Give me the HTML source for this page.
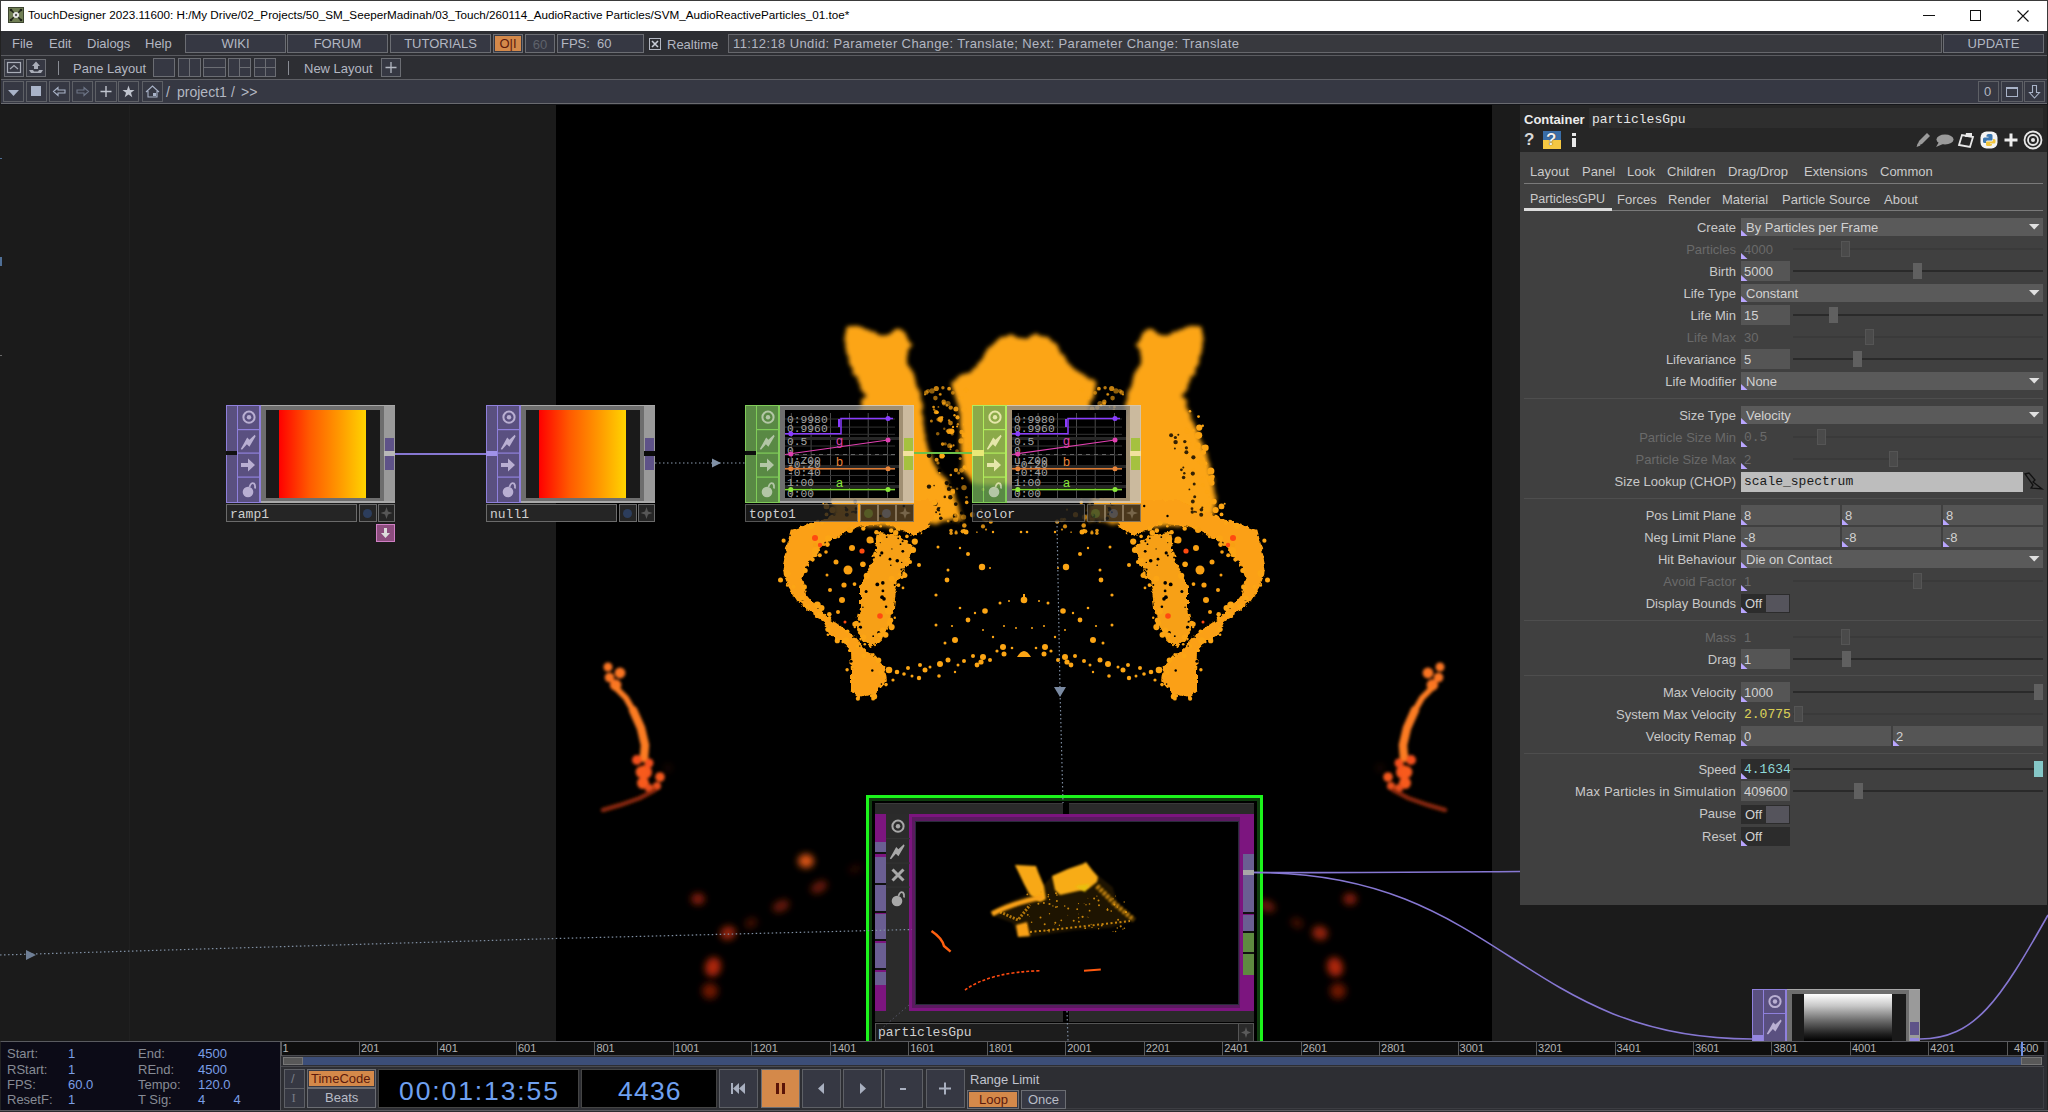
<!DOCTYPE html>
<html><head><meta charset="utf-8">
<style>
*{margin:0;padding:0;box-sizing:border-box}
html,body{width:2048px;height:1112px;overflow:hidden;background:#1b1b1b;font-family:"Liberation Sans",sans-serif;position:relative}
.a{position:absolute}
.t{position:absolute;white-space:nowrap;line-height:1}
.mono{font-family:"Liberation Mono",monospace}
.btn{position:absolute;background:#363843;border:1px solid #6b6d73}
.mt{color:#b3b7c2;font-size:13px}
.c{text-align:center}
svg{position:absolute;overflow:visible}

</style></head><body>
<!-- TITLE BAR -->
<div class="a" style="left:0;top:0;width:2048px;height:31px;background:#fff;border-top:1px solid #3a3a3a;border-left:1px solid #3a3a3a;border-right:1px solid #3a3a3a"></div>
<div class="a" style="left:8px;top:7px;width:16px;height:16px;background:#717f55;border:1px solid #3d4530"></div>
<svg style="left:8px;top:7px" width="16" height="16"><path d="M3 3L6 6M13 3L10 6M3 13L6 10M13 13L10 10" stroke="#1e2218" stroke-width="1.5"/><circle cx="3" cy="3" r="1.3" fill="#1e2218"/><circle cx="13" cy="3" r="1.3" fill="#1e2218"/><circle cx="3" cy="13" r="1.3" fill="#1e2218"/><circle cx="13" cy="13" r="1.3" fill="#1e2218"/><circle cx="8" cy="8" r="3" fill="#e8e8e8"/><circle cx="8" cy="8" r="1.2" fill="#555"/></svg>
<div class="t" style="left:28px;top:9px;font-size:11.7px;color:#000">TouchDesigner 2023.11600: H:/My Drive/02_Projects/50_SM_SeeperMadinah/03_Touch/260114_AudioRactive Particles/SVM_AudioReactiveParticles_01.toe*</div>
<div class="a" style="left:1923px;top:15px;width:12px;height:1px;background:#111"></div>
<div class="a" style="left:1970px;top:10px;width:11px;height:11px;border:1px solid #111"></div>
<svg style="left:2017px;top:10px" width="12" height="12"><path d="M0.5 0.5L11.5 11.5M11.5 0.5L0.5 11.5" stroke="#111" stroke-width="1.1"/></svg>

<!-- BARS -->
<div class="a" style="left:0;top:31px;width:2048px;height:49px;background:#2d2e33;border-left:1px solid #222;border-right:1px solid #222"></div>
<div class="a" style="left:1px;top:55px;width:2046px;height:1px;background:#5a5b60"></div>
<div class="a" style="left:1px;top:79px;width:2046px;height:1px;background:#5f6066"></div>
<div class="a" style="left:0;top:80px;width:2048px;height:23px;background:#363843;border-left:1px solid #222;border-right:1px solid #222"></div>
<div class="a" style="left:1px;top:103px;width:2046px;height:1px;background:#6a6b70"></div>
<div class="a" style="left:0;top:104px;width:2048px;height:1px;background:#15161a"></div>

<!-- MENU -->
<div class="t mt" style="left:12px;top:37px">File</div>
<div class="t mt" style="left:49px;top:37px">Edit</div>
<div class="t mt" style="left:87px;top:37px">Dialogs</div>
<div class="t mt" style="left:145px;top:37px">Help</div>
<div class="btn t mt c" style="left:185px;top:34px;width:101px;height:19px;padding-top:2px">WIKI</div>
<div class="btn t mt c" style="left:287px;top:34px;width:101px;height:19px;padding-top:2px">FORUM</div>
<div class="btn t mt c" style="left:390px;top:34px;width:101px;height:19px;padding-top:2px">TUTORIALS</div>
<div class="btn" style="left:493px;top:34px;width:30px;height:19px"></div>
<div class="t c" style="left:495px;top:36px;width:26px;height:15px;background:#d4894a;color:#5c1a0c;font-size:13px;padding-top:1px">O|I</div>
<div class="btn t c" style="left:525px;top:34px;width:30px;height:19px;padding-top:3px;color:#5f626b;font-size:13px">60</div>
<div class="btn" style="left:557px;top:34px;width:87px;height:19px"></div>
<div class="t mt" style="left:561px;top:37px">FPS:</div>
<div class="t mt" style="left:597px;top:37px">60</div>
<div class="a" style="left:649px;top:38px;width:12px;height:12px;border:1px solid #b3b7c2"></div>
<svg style="left:649px;top:38px" width="12" height="12"><path d="M3 3L9 9M9 3L3 9" stroke="#c8ccd6" stroke-width="1.6"/></svg>
<div class="t mt" style="left:667px;top:38px">Realtime</div>
<div class="a" style="left:728px;top:34px;width:1214px;height:19px;background:#38393e;border:1px solid #66676c"></div>
<div class="t mt" style="left:733px;top:37px;letter-spacing:0.38px">11:12:18 Undid: Parameter Change: Translate; Next: Parameter Change: Translate</div>
<div class="btn t mt c" style="left:1943px;top:34px;width:101px;height:19px;padding-top:2px">UPDATE</div>

<!-- PANE LAYOUT BAR -->
<div class="btn" style="left:4px;top:59px;width:20px;height:18px"></div>
<svg style="left:4px;top:59px" width="20" height="18"><rect x="3.5" y="3.5" width="13" height="10" fill="none" stroke="#a9adb8" stroke-width="1.2"/><path d="M6 10L10 6.5L14 10" fill="none" stroke="#a9adb8" stroke-width="1.2"/></svg>
<div class="btn" style="left:26px;top:59px;width:20px;height:18px"></div>
<svg style="left:26px;top:59px" width="20" height="18"><path d="M3 11 L5 14 L15 14 L17 11 L13 11 L12 12.5 L8 12.5 L7 11Z" fill="#a9adb8"/><path d="M8 10 L8 7 L6 7 L10 2.5 L14 7 L12 7 L12 10Z" fill="#a9adb8"/></svg>
<div class="a" style="left:58px;top:61px;width:1px;height:14px;background:#8a8d95"></div>
<div class="t mt" style="left:73px;top:62px">Pane Layout</div>
<div class="btn" style="left:153px;top:58px;width:22px;height:19px"></div>
<div class="btn" style="left:178px;top:58px;width:23px;height:19px"></div>
<div class="a" style="left:189px;top:58px;width:1px;height:19px;background:#6b6d73"></div>
<div class="btn" style="left:203px;top:58px;width:23px;height:19px"></div>
<div class="a" style="left:203px;top:67px;width:23px;height:1px;background:#6b6d73"></div>
<div class="btn" style="left:228px;top:58px;width:23px;height:19px"></div>
<div class="a" style="left:239px;top:58px;width:1px;height:19px;background:#6b6d73"></div>
<div class="a" style="left:239px;top:67px;width:12px;height:1px;background:#6b6d73"></div>
<div class="btn" style="left:254px;top:58px;width:22px;height:19px"></div>
<div class="a" style="left:265px;top:58px;width:1px;height:19px;background:#6b6d73"></div>
<div class="a" style="left:254px;top:67px;width:22px;height:1px;background:#6b6d73"></div>
<div class="a" style="left:288px;top:61px;width:1px;height:14px;background:#8a8d95"></div>
<div class="t mt" style="left:304px;top:62px">New Layout</div>
<div class="btn" style="left:381px;top:58px;width:20px;height:19px"></div>
<svg style="left:381px;top:58px" width="20" height="19"><path d="M10 4V15M4.5 9.5H15.5" stroke="#b3b7c2" stroke-width="1.3"/></svg>

<!-- PATH BAR -->
<div class="btn" style="left:3px;top:81px;width:21px;height:21px;border-color:#5e6066"></div>
<svg style="left:3px;top:81px" width="21" height="21"><path d="M5 9H16L10.5 15Z" fill="#a9b3c8"/></svg>
<div class="btn" style="left:26px;top:81px;width:21px;height:21px;border-color:#5e6066"></div>
<div class="a" style="left:31px;top:86px;width:10px;height:10px;background:#a9b3c8"></div>
<div class="btn" style="left:49px;top:81px;width:21px;height:21px;border-color:#5e6066"></div>
<svg style="left:49px;top:81px" width="21" height="21"><path d="M4.5 10.5L9 6.5V9H16V12H9V14.5Z" fill="none" stroke="#a9b3c8" stroke-width="1.1"/></svg>
<div class="btn" style="left:72px;top:81px;width:21px;height:21px;border-color:#5e6066"></div>
<svg style="left:72px;top:81px" width="21" height="21"><path d="M16.5 10.5L12 6.5V9H5V12H12V14.5Z" fill="none" stroke="#6e7688" stroke-width="1.1"/></svg>
<div class="btn" style="left:95px;top:81px;width:22px;height:21px;border-color:#5e6066"></div>
<svg style="left:95px;top:81px" width="22" height="21"><path d="M11 5V16M5.5 10.5H16.5" stroke="#c0c4ce" stroke-width="1.4"/></svg>
<div class="btn" style="left:118px;top:81px;width:21px;height:21px;border-color:#5e6066"></div>
<svg style="left:118px;top:81px" width="21" height="21"><path d="M10.5 4.5L12 9H16.5L13 11.8L14.3 16.3L10.5 13.5L6.7 16.3L8 11.8L4.5 9H9Z" fill="#c0c4ce"/></svg>
<div class="btn" style="left:142px;top:81px;width:21px;height:21px;border-color:#5e6066"></div>
<svg style="left:142px;top:81px" width="21" height="21"><path d="M4 11L10.5 5L17 11M6 10V16H15V10" fill="none" stroke="#a9b3c8" stroke-width="1.1"/><rect x="11" y="12" width="3" height="3" fill="#a9b3c8"/></svg>
<div class="t" style="left:166px;top:85px;font-size:14px;color:#b3b7c2">/</div><div class="t" style="left:177px;top:85px;font-size:14px;color:#b3b7c2">project1</div><div class="t" style="left:231px;top:85px;font-size:14px;color:#b3b7c2">/</div><div class="t" style="left:241px;top:85px;font-size:14px;color:#b3b7c2">&gt;&gt;</div>
<div class="a" style="left:1975px;top:80px;width:72px;height:23px;background:#363843"></div>
<div class="btn" style="left:1978px;top:81px;width:21px;height:21px;border-color:#5e6066"></div>
<div class="t" style="left:1984px;top:85px;font-size:13px;color:#b3b7c2">0</div>
<div class="btn" style="left:2001px;top:81px;width:22px;height:21px;border-color:#5e6066"></div>
<div class="a" style="left:2006px;top:87px;width:12px;height:10px;border:1.2px solid #a9b3c8;border-top:2px solid #a9b3c8"></div>
<div class="btn" style="left:2024px;top:81px;width:21px;height:21px;border-color:#5e6066"></div>
<svg style="left:2024px;top:81px" width="21" height="21"><path d="M8.5 4.5H12.5V11.5H15.5L10.5 17L5.5 11.5H8.5Z" fill="none" stroke="#a9b3c8" stroke-width="1.1"/></svg>

<div class="a" style="left:129px;top:105px;width:1px;height:936px;background:#202020"></div>
<div class="a" style="left:0;top:257px;width:2px;height:9px;background:#4f6f96"></div>
<div class="a" style="left:0;top:158px;width:2px;height:1px;background:#4f6f96"></div>
<div class="a" style="left:0;top:355px;width:2px;height:1px;background:#6a6a6a"></div>

<div class="a" style="left:556px;top:105px;width:936px;height:936px;background:#000"></div>

<div class="a" style="left:556px;top:105px;width:936px;height:936px;overflow:hidden">
<svg style="left:-556px;top:-105px" width="2048" height="1112" viewBox="0 0 2048 1112">
<defs>
<filter id="b1" x="-20%" y="-20%" width="140%" height="140%"><feTurbulence type="fractalNoise" baseFrequency="0.2" numOctaves="2" seed="9" result="n"/><feDisplacementMap in="SourceGraphic" in2="n" scale="6" xChannelSelector="R" yChannelSelector="G" result="d"/><feGaussianBlur in="d" stdDeviation="0.7"/></filter>
<filter id="b2" x="-20%" y="-20%" width="140%" height="140%"><feTurbulence type="fractalNoise" baseFrequency="0.12" numOctaves="2" seed="4" result="n"/><feDisplacementMap in="SourceGraphic" in2="n" scale="6" xChannelSelector="R" yChannelSelector="G" result="d"/><feGaussianBlur in="d" stdDeviation="2.3"/></filter>
<filter id="b15" x="-30%" y="-30%" width="160%" height="160%"><feGaussianBlur stdDeviation="1.5"/></filter>
<filter id="b5" x="-100%" y="-100%" width="300%" height="300%"><feGaussianBlur stdDeviation="3.5"/></filter>
</defs>
<path d="M1000.0,337.0 L1015.5,335.0 L1024.0,339.0 L1032.5,335.0 L1048.0,337.0 L1060.0,350.0 L1068.0,362.0 L1076.0,371.0 L1088.0,376.0 L1096.0,383.4 L1094.0,391.2 L1091.0,403.0 L1088.0,415.0 L1088.0,450.0 L1085.0,470.0 L1073.0,485.0 L975.0,485.0 L963.0,470.0 L960.0,450.0 L960.0,415.0 L957.0,403.0 L954.0,391.2 L952.0,383.4 L960.0,376.0 L972.0,371.0 L980.0,362.0 L988.0,350.0 Z" fill="#fca514" filter="url(#b2)"/><circle cx="1024" cy="600" r="3.3" fill="#fca514"/><rect x="1023" y="594" width="2" height="5" fill="#fca514"/><path d="M1017,657 Q1024,645 1031,657Z" fill="#fca514"/>
<g><path d="M846.6,329.6 L851.5,325.7 L869.0,329.6 L884.7,335.5 L898.4,330.6 L904.2,329.6 L908.0,340.4 L913.0,343.3 L907.0,352.0 L907.0,363.8 L914.0,373.6 L916.0,383.4 L920.0,395.0 L923.0,415.0 L925.0,440.0 L933.0,462.0 L952.0,490.0 L963.0,520.0 L900.0,527.0 L836.0,524.0 L832.0,500.0 L838.0,465.0 L850.0,432.0 L862.0,404.8 L859.3,401.0 L867.0,396.0 L861.3,391.2 L857.3,378.5 L849.5,363.8 L844.6,344.3 Z" fill="#fca514" filter="url(#b2)"/>
<path d="M790.7,529.7 L786.2,546.8 L782.6,568.4 L787.1,584.6 L797.0,600.8 L809.6,611.5 L824.0,622.3 L829.4,635.0 L845.6,644.0 L850.0,653.0 L851.0,671.0 L851.0,690.7 L860.0,698.0 L874.4,694.3 L887.0,680.0 L885.0,667.3 L874.4,656.5 L863.6,647.5 L854.6,636.7 L845.6,629.5 L827.6,617.0 L815.0,604.4 L806.0,593.6 L802.4,579.0 L806.0,568.4 L813.2,557.6 L822.2,546.8 L833.0,539.6 L845.6,532.4 L860.0,527.0 L870.8,525.2 L885.0,523.4 L914.0,536.0 L924.7,530.6 L939.0,510.8 L941.0,500.0 L870.8,500.0 L833.0,516.0 L806.0,525.0 Z" fill="#fba012" filter="url(#b1)"/>
<path d="M878.0,532.4 L899.5,536.0 L914.0,546.8 L908.5,564.8 L899.5,575.6 L896.0,590.0 L894.0,608.0 L887.0,626.0 L881.5,640.3 L870.8,647.5 L860.0,636.7 L856.4,626.0 L860.0,608.0 L860.0,586.4 L867.0,572.0 L874.4,554.0 L876.2,541.4 Z" fill="#f7a012" filter="url(#b1)"/>
<circle cx="882.1" cy="597.2" r="1.9" fill="#000"/>
<circle cx="882.9" cy="590.9" r="1.4" fill="#000"/>
<circle cx="866.1" cy="591.4" r="1.5" fill="#000"/>
<circle cx="902.6" cy="541.3" r="1.0" fill="#000"/>
<circle cx="860.4" cy="627.2" r="1.6" fill="#000"/>
<circle cx="891.9" cy="548.9" r="0.6" fill="#000"/>
<circle cx="886.7" cy="537.1" r="0.9" fill="#000"/>
<circle cx="882.8" cy="582.9" r="1.8" fill="#000"/>
<circle cx="886.1" cy="606.8" r="1.3" fill="#000"/>
<circle cx="894.7" cy="584.9" r="1.0" fill="#000"/>
<circle cx="873.9" cy="557.6" r="1.0" fill="#000"/>
<circle cx="859.2" cy="622.0" r="1.2" fill="#000"/>
<circle cx="901.7" cy="562.4" r="0.7" fill="#000"/>
<circle cx="900.5" cy="544.2" r="0.9" fill="#000"/>
<circle cx="902.8" cy="551.3" r="1.4" fill="#000"/>
<circle cx="881.8" cy="552.9" r="1.6" fill="#000"/>
<circle cx="862.9" cy="607.2" r="0.8" fill="#000"/>
<circle cx="880.2" cy="555.5" r="1.0" fill="#000"/>
<circle cx="873.2" cy="636.2" r="0.9" fill="#000"/>
<circle cx="878.7" cy="632.5" r="1.5" fill="#000"/>
<circle cx="901.4" cy="569.5" r="1.0" fill="#000"/>
<circle cx="890.0" cy="559.2" r="1.4" fill="#000"/>
<circle cx="877.3" cy="584.4" r="1.9" fill="#000"/>
<circle cx="884.0" cy="598.9" r="1.8" fill="#000"/>
<circle cx="880.3" cy="542.5" r="0.7" fill="#000"/>
<circle cx="897.3" cy="560.8" r="1.8" fill="#000"/>
<circle cx="890.8" cy="565.2" r="0.8" fill="#000"/>
<circle cx="898.2" cy="538.3" r="0.9" fill="#000"/>
<circle cx="872.3" cy="670.5" r="1.2" fill="#000"/>
<circle cx="790.0" cy="535.3" r="0.9" fill="#000"/>
<circle cx="859.6" cy="646.1" r="0.9" fill="#000"/>
<circle cx="880.5" cy="516.0" r="1.2" fill="#000"/>
<circle cx="852.7" cy="667.7" r="0.6" fill="#000"/>
<circle cx="903.8" cy="506.0" r="1.2" fill="#000"/>
<circle cx="881.4" cy="684.1" r="0.8" fill="#000"/>
<circle cx="851.1" cy="661.2" r="1.5" fill="#000"/>
<circle cx="802.5" cy="599.3" r="1.4" fill="#000"/>
<circle cx="825.4" cy="542.8" r="1.0" fill="#000"/>
<circle cx="944.8" cy="496.9" r="1.3" fill="#000" opacity="0.85"/>
<circle cx="961.4" cy="512.9" r="1.6" fill="#000" opacity="0.85"/>
<circle cx="929.1" cy="455.6" r="2.3" fill="#000" opacity="0.85"/>
<circle cx="952.1" cy="453.1" r="1.8" fill="#000" opacity="0.85"/>
<circle cx="954.9" cy="473.2" r="0.8" fill="#000" opacity="0.85"/>
<circle cx="943.5" cy="460.2" r="0.8" fill="#000" opacity="0.85"/>
<circle cx="936.1" cy="512.2" r="1.0" fill="#000" opacity="0.85"/>
<circle cx="949.4" cy="453.5" r="1.6" fill="#000" opacity="0.85"/>
<circle cx="950.3" cy="497.2" r="2.2" fill="#000" opacity="0.85"/>
<circle cx="951.3" cy="521.9" r="1.1" fill="#000" opacity="0.85"/>
<circle cx="934.1" cy="485.6" r="0.8" fill="#000" opacity="0.85"/>
<circle cx="952.3" cy="485.4" r="1.1" fill="#000" opacity="0.85"/>
<circle cx="939.8" cy="470.4" r="2.0" fill="#000" opacity="0.85"/>
<circle cx="948.9" cy="489.0" r="2.1" fill="#000" opacity="0.85"/>
<circle cx="954.9" cy="479.5" r="2.3" fill="#000" opacity="0.85"/>
<circle cx="959.7" cy="456.5" r="2.0" fill="#000" opacity="0.85"/>
<circle cx="943.4" cy="459.7" r="1.9" fill="#000" opacity="0.85"/>
<circle cx="940.8" cy="518.2" r="1.8" fill="#000" opacity="0.85"/>
<circle cx="955.1" cy="515.9" r="2.4" fill="#000" opacity="0.85"/>
<circle cx="950.1" cy="484.8" r="1.1" fill="#000" opacity="0.85"/>
<circle cx="955.8" cy="504.1" r="1.9" fill="#000" opacity="0.85"/>
<circle cx="935.3" cy="503.8" r="2.3" fill="#000" opacity="0.85"/>
<circle cx="961.2" cy="523.5" r="1.7" fill="#000" opacity="0.85"/>
<circle cx="938.9" cy="509.3" r="2.3" fill="#000" opacity="0.85"/>
<circle cx="939.8" cy="514.2" r="0.9" fill="#000" opacity="0.85"/>
<circle cx="946.7" cy="483.1" r="2.1" fill="#000" opacity="0.85"/>
<circle cx="929.0" cy="486.6" r="2.2" fill="#000" opacity="0.85"/>
<circle cx="955.2" cy="454.8" r="1.1" fill="#000" opacity="0.85"/>
<circle cx="954.8" cy="475.1" r="1.0" fill="#000" opacity="0.85"/>
<circle cx="945.6" cy="461.2" r="2.0" fill="#000" opacity="0.85"/>
<circle cx="848" cy="570" r="4.5" fill="#f8a012"/>
<circle cx="836" cy="562" r="2.5" fill="#f8a012"/>
<circle cx="842" cy="600" r="3" fill="#f8a012"/>
<circle cx="830" cy="590" r="2" fill="#f8a012"/>
<circle cx="852" cy="548" r="3" fill="#f8a012"/>
<circle cx="827" cy="575" r="1.5" fill="#f8a012"/>
<circle cx="838" cy="612" r="2" fill="#f8a012"/>
<circle cx="815" cy="545" r="2.2" fill="#f8a012"/>
<circle cx="870" cy="540" r="3.5" fill="#f8a012"/>
<circle cx="850" cy="530" r="3" fill="#f8a012"/>
<circle cx="826" cy="552" r="1.8" fill="#f8a012"/>
<circle cx="844" cy="585" r="2.6" fill="#f8a012"/>
<circle cx="851.9" cy="527.6" r="1.4" fill="#fca514"/>
<circle cx="880.8" cy="672.4" r="2.5" fill="#fca514"/>
<circle cx="853.1" cy="678.1" r="1.9" fill="#fca514"/>
<circle cx="815.7" cy="555.1" r="1.9" fill="#fca514"/>
<circle cx="847.1" cy="669.8" r="1.7" fill="#fca514"/>
<circle cx="942.1" cy="509.7" r="2.4" fill="#fca514"/>
<circle cx="780.5" cy="579.9" r="2.5" fill="#fca514"/>
<circle cx="891.2" cy="530.6" r="2.3" fill="#fca514"/>
<circle cx="814.1" cy="555.0" r="2.2" fill="#fca514"/>
<circle cx="880.7" cy="526.2" r="1.3" fill="#fca514"/>
<circle cx="873.1" cy="654.7" r="1.6" fill="#fca514"/>
<circle cx="886.0" cy="684.6" r="1.8" fill="#fca514"/>
<circle cx="887.9" cy="523.2" r="2.4" fill="#fca514"/>
<circle cx="864.8" cy="644.2" r="1.3" fill="#fca514"/>
<circle cx="828.3" cy="538.4" r="3.2" fill="#fca514"/>
<circle cx="934.5" cy="502.8" r="2.6" fill="#fca514"/>
<circle cx="846.3" cy="640.6" r="3.3" fill="#fca514"/>
<circle cx="821.5" cy="608.1" r="3.0" fill="#fca514"/>
<circle cx="874.3" cy="696.4" r="2.9" fill="#fca514"/>
<circle cx="863.7" cy="655.9" r="2.4" fill="#fca514"/>
<circle cx="842.8" cy="641.9" r="1.4" fill="#fca514"/>
<circle cx="851.7" cy="506.8" r="1.5" fill="#fca514"/>
<circle cx="914.8" cy="541.6" r="3.1" fill="#fca514"/>
<circle cx="808.1" cy="606.7" r="2.6" fill="#fca514"/>
<circle cx="853.2" cy="509.1" r="1.6" fill="#fca514"/>
<circle cx="852.2" cy="689.9" r="1.3" fill="#fca514"/>
<circle cx="863.3" cy="528.6" r="2.2" fill="#fca514"/>
<circle cx="804.1" cy="587.0" r="2.8" fill="#fca514"/>
<circle cx="857.9" cy="698.7" r="2.1" fill="#fca514"/>
<circle cx="873.1" cy="698.7" r="1.9" fill="#fca514"/>
<circle cx="819.5" cy="614.4" r="2.6" fill="#fca514"/>
<circle cx="819.8" cy="555.2" r="2.0" fill="#fca514"/>
<circle cx="875.1" cy="657.3" r="1.6" fill="#fca514"/>
<circle cx="812.6" cy="559.4" r="2.1" fill="#fca514"/>
<circle cx="838.7" cy="536.8" r="1.4" fill="#fca514"/>
<circle cx="817.3" cy="604.9" r="3.5" fill="#fca514"/>
<circle cx="793.6" cy="586.8" r="2.0" fill="#fca514"/>
<circle cx="815.4" cy="550.8" r="3.5" fill="#fca514"/>
<circle cx="883.9" cy="675.9" r="1.3" fill="#fca514"/>
<circle cx="827.9" cy="634.7" r="1.3" fill="#fca514"/>
<circle cx="871.6" cy="695.8" r="1.8" fill="#fca514"/>
<circle cx="802.2" cy="598.1" r="2.5" fill="#fca514"/>
<circle cx="827.9" cy="629.3" r="2.6" fill="#fca514"/>
<circle cx="787.1" cy="573.5" r="3.4" fill="#fca514"/>
<circle cx="898.1" cy="528.4" r="2.3" fill="#fca514"/>
<circle cx="847.5" cy="631.3" r="1.9" fill="#fca514"/>
<circle cx="857.6" cy="646.1" r="1.9" fill="#fca514"/>
<circle cx="783.6" cy="540.7" r="2.1" fill="#fca514"/>
<circle cx="805.2" cy="570.6" r="2.5" fill="#fca514"/>
<circle cx="829.3" cy="614.3" r="2.3" fill="#fca514"/>
<circle cx="889.0" cy="670.0" r="3.3" fill="#fca514"/>
<circle cx="852.6" cy="666.9" r="1.5" fill="#fca514"/>
<circle cx="827.4" cy="544.5" r="2.4" fill="#fca514"/>
<circle cx="837.3" cy="640.7" r="2.6" fill="#fca514"/>
<circle cx="811.3" cy="525.9" r="3.1" fill="#fca514"/>
<circle cx="849.6" cy="650.4" r="1.5" fill="#fca514"/>
<circle cx="829.5" cy="617.7" r="1.8" fill="#fca514"/>
<circle cx="845.3" cy="513.4" r="1.8" fill="#fca514"/>
<circle cx="878.5" cy="660.3" r="2.8" fill="#fca514"/>
<circle cx="787.2" cy="585.5" r="1.3" fill="#fca514"/>
<circle cx="849.9" cy="435.6" r="3.3" fill="#fca514"/>
<circle cx="861.7" cy="428.5" r="1.6" fill="#fca514"/>
<circle cx="822.3" cy="522.9" r="1.8" fill="#fca514"/>
<circle cx="843.1" cy="466.9" r="1.3" fill="#fca514"/>
<circle cx="832.4" cy="510.0" r="3.1" fill="#fca514"/>
<circle cx="826.5" cy="506.4" r="2.9" fill="#fca514"/>
<circle cx="844.2" cy="461.1" r="1.4" fill="#fca514"/>
<circle cx="848.7" cy="427.6" r="3.1" fill="#fca514"/>
<circle cx="837.2" cy="478.6" r="3.1" fill="#fca514"/>
<circle cx="860.8" cy="431.1" r="2.6" fill="#fca514"/>
<circle cx="835.6" cy="476.8" r="2.4" fill="#fca514"/>
<circle cx="845.7" cy="459.7" r="2.4" fill="#fca514"/>
<circle cx="823.3" cy="503.8" r="1.0" fill="#fca514"/>
<circle cx="850.7" cy="445.7" r="3.3" fill="#fca514"/>
<circle cx="837.2" cy="479.4" r="2.9" fill="#fca514"/>
<circle cx="842.5" cy="447.7" r="3.2" fill="#fca514"/>
<circle cx="849.1" cy="435.2" r="3.3" fill="#fca514"/>
<circle cx="844.5" cy="447.1" r="2.1" fill="#fca514"/>
<circle cx="845.7" cy="478.4" r="1.7" fill="#fca514"/>
<circle cx="837.1" cy="471.0" r="3.5" fill="#fca514"/>
<circle cx="846.2" cy="462.7" r="2.8" fill="#fca514"/>
<circle cx="854.9" cy="469.4" r="1.2" fill="#fca514"/>
<circle cx="839.4" cy="505.3" r="2.5" fill="#fca514"/>
<circle cx="834.1" cy="501.6" r="2.8" fill="#fca514"/>
<circle cx="844.5" cy="452.3" r="2.5" fill="#fca514"/>
<circle cx="854.7" cy="430.4" r="1.2" fill="#fca514"/>
<circle cx="849.6" cy="462.3" r="1.6" fill="#fca514"/>
<circle cx="849.5" cy="416.6" r="1.4" fill="#fca514"/>
<circle cx="858.6" cy="444.0" r="2.1" fill="#fca514"/>
<circle cx="841.2" cy="476.9" r="1.8" fill="#fca514"/>
<circle cx="839.0" cy="472.7" r="1.3" fill="#fca514"/>
<circle cx="851.9" cy="446.1" r="1.1" fill="#fca514"/>
<circle cx="845.1" cy="485.2" r="2.1" fill="#fca514"/>
<circle cx="841.0" cy="491.9" r="2.2" fill="#fca514"/>
<circle cx="826.5" cy="514.4" r="1.9" fill="#fca514"/>
<circle cx="837.3" cy="502.8" r="1.8" fill="#fca514"/>
<circle cx="845.2" cy="425.7" r="1.2" fill="#fca514"/>
<circle cx="839.4" cy="481.1" r="1.1" fill="#fca514"/>
<circle cx="838.8" cy="497.1" r="1.0" fill="#fca514"/>
<circle cx="846.0" cy="453.5" r="1.2" fill="#fca514"/>
<circle cx="842.6" cy="463.4" r="1.9" fill="#fca514"/>
<circle cx="858.0" cy="411.2" r="1.3" fill="#fca514"/>
<circle cx="832.1" cy="516.2" r="1.4" fill="#fca514"/>
<circle cx="836.2" cy="483.0" r="2.7" fill="#fca514"/>
<circle cx="843.6" cy="446.9" r="1.7" fill="#fca514"/>
<circle cx="846.6" cy="509.7" r="1.8" fill="#000" opacity="0.8"/>
<circle cx="854.6" cy="457.3" r="2.1" fill="#000" opacity="0.8"/>
<circle cx="851.8" cy="512.1" r="0.8" fill="#000" opacity="0.8"/>
<circle cx="863.7" cy="473.3" r="1.2" fill="#000" opacity="0.8"/>
<circle cx="861.6" cy="447.8" r="1.6" fill="#000" opacity="0.8"/>
<circle cx="853.8" cy="484.0" r="1.5" fill="#000" opacity="0.8"/>
<circle cx="866.6" cy="469.8" r="1.4" fill="#000" opacity="0.8"/>
<circle cx="855.7" cy="512.0" r="1.7" fill="#000" opacity="0.8"/>
<circle cx="846.8" cy="514.8" r="2.0" fill="#000" opacity="0.8"/>
<circle cx="855.2" cy="473.6" r="2.1" fill="#000" opacity="0.8"/>
<circle cx="858.6" cy="489.4" r="0.9" fill="#000" opacity="0.8"/>
<circle cx="845.7" cy="507.6" r="1.1" fill="#000" opacity="0.8"/>
<circle cx="872.4" cy="442.1" r="2.2" fill="#000" opacity="0.8"/>
<circle cx="855.2" cy="501.5" r="1.9" fill="#000" opacity="0.8"/>
<circle cx="876.9" cy="435.2" r="2.0" fill="#000" opacity="0.8"/>
<circle cx="856.0" cy="508.7" r="1.4" fill="#000" opacity="0.8"/>
<circle cx="861.6" cy="452.2" r="2.0" fill="#000" opacity="0.8"/>
<circle cx="864.7" cy="467.4" r="1.0" fill="#000" opacity="0.8"/>
<circle cx="853.1" cy="511.7" r="1.0" fill="#000" opacity="0.8"/>
<circle cx="853.3" cy="496.8" r="1.5" fill="#000" opacity="0.8"/>
<circle cx="869.7" cy="434.8" r="1.0" fill="#000" opacity="0.8"/>
<circle cx="873.1" cy="448.4" r="1.0" fill="#000" opacity="0.8"/>
<circle cx="863.2" cy="441.6" r="1.7" fill="#000" opacity="0.8"/>
<circle cx="864.4" cy="477.5" r="1.8" fill="#000" opacity="0.8"/>
<circle cx="872.6" cy="437.5" r="1.6" fill="#000" opacity="0.8"/>
<circle cx="879.5" cy="539.6" r="3.0" fill="#fca514"/>
<circle cx="906.2" cy="560.0" r="1.9" fill="#fca514"/>
<circle cx="875.0" cy="553.5" r="1.7" fill="#fca514"/>
<circle cx="908.3" cy="562.0" r="1.1" fill="#fca514"/>
<circle cx="910.1" cy="561.9" r="2.0" fill="#fca514"/>
<circle cx="904.8" cy="575.3" r="2.6" fill="#fca514"/>
<circle cx="885.6" cy="634.8" r="2.9" fill="#fca514"/>
<circle cx="891.6" cy="627.1" r="3.1" fill="#fca514"/>
<circle cx="864.5" cy="637.3" r="1.2" fill="#fca514"/>
<circle cx="888.1" cy="611.2" r="3.1" fill="#fca514"/>
<circle cx="872.6" cy="541.7" r="1.2" fill="#fca514"/>
<circle cx="903.0" cy="587.9" r="1.4" fill="#fca514"/>
<circle cx="894.8" cy="617.7" r="1.2" fill="#fca514"/>
<circle cx="882.8" cy="630.2" r="2.7" fill="#fca514"/>
<circle cx="856.4" cy="623.1" r="2.4" fill="#fca514"/>
<circle cx="898.5" cy="585.1" r="1.9" fill="#fca514"/>
<circle cx="895.7" cy="532.7" r="2.7" fill="#fca514"/>
<circle cx="881.4" cy="634.9" r="1.7" fill="#fca514"/>
<circle cx="858.5" cy="629.3" r="1.5" fill="#fca514"/>
<circle cx="858.8" cy="630.5" r="1.3" fill="#fca514"/>
<circle cx="860.6" cy="639.1" r="1.3" fill="#fca514"/>
<circle cx="890.4" cy="620.2" r="2.8" fill="#fca514"/>
<circle cx="889.5" cy="623.3" r="2.7" fill="#fca514"/>
<circle cx="899.5" cy="574.3" r="1.7" fill="#fca514"/>
<circle cx="854.9" cy="624.1" r="2.6" fill="#fca514"/>
<circle cx="879.5" cy="634.6" r="2.2" fill="#fca514"/>
<circle cx="878.5" cy="641.3" r="1.7" fill="#fca514"/>
<circle cx="891.6" cy="578.7" r="3.0" fill="#fca514"/>
<circle cx="880.3" cy="635.5" r="2.3" fill="#fca514"/>
<circle cx="913.1" cy="550.0" r="3.0" fill="#fca514"/>
<circle cx="901.9" cy="577.3" r="1.8" fill="#fca514"/>
<circle cx="876.4" cy="532.2" r="2.2" fill="#fca514"/>
<circle cx="903.9" cy="572.9" r="1.6" fill="#fca514"/>
<circle cx="863.6" cy="637.3" r="2.7" fill="#fca514"/>
<circle cx="854.5" cy="584.1" r="1.9" fill="#fca514"/>
<circle cx="862.9" cy="564.3" r="2.8" fill="#fca514"/>
<circle cx="866.8" cy="575.8" r="3.1" fill="#fca514"/>
<circle cx="859.3" cy="624.2" r="1.7" fill="#fca514"/>
<circle cx="906.9" cy="536.4" r="1.8" fill="#fca514"/>
<circle cx="854.8" cy="627.1" r="1.2" fill="#fca514"/>
<circle cx="943.8" cy="403.7" r="1.8" fill="#fca514" opacity="0.70"/>
<circle cx="952.8" cy="392.8" r="1.9" fill="#fca514" opacity="0.62"/>
<circle cx="947.0" cy="430.9" r="1.3" fill="#fca514" opacity="0.53"/>
<circle cx="990.8" cy="521.7" r="2.1" fill="#fca514" opacity="0.93"/>
<circle cx="968.9" cy="448.2" r="1.2" fill="#fca514" opacity="0.87"/>
<circle cx="977.7" cy="470.0" r="1.0" fill="#fca514" opacity="0.90"/>
<circle cx="947.9" cy="403.6" r="2.7" fill="#fca514" opacity="0.50"/>
<circle cx="940.8" cy="421.6" r="1.4" fill="#fca514" opacity="0.53"/>
<circle cx="983.5" cy="519.3" r="1.6" fill="#fca514" opacity="0.68"/>
<circle cx="939.6" cy="472.8" r="0.9" fill="#fca514" opacity="0.95"/>
<circle cx="951.7" cy="431.2" r="2.7" fill="#fca514" opacity="0.99"/>
<circle cx="943.5" cy="455.9" r="1.4" fill="#fca514" opacity="0.96"/>
<circle cx="955.7" cy="519.5" r="2.5" fill="#fca514" opacity="0.68"/>
<circle cx="941.9" cy="455.9" r="2.6" fill="#fca514" opacity="1.00"/>
<circle cx="954.5" cy="415.3" r="1.2" fill="#fca514" opacity="0.94"/>
<circle cx="926.3" cy="392.5" r="2.3" fill="#fca514" opacity="0.66"/>
<circle cx="986.1" cy="520.0" r="2.2" fill="#fca514" opacity="0.57"/>
<circle cx="983.1" cy="489.4" r="1.7" fill="#fca514" opacity="0.54"/>
<circle cx="940.5" cy="418.5" r="2.2" fill="#fca514" opacity="0.60"/>
<circle cx="936.0" cy="412.2" r="2.1" fill="#fca514" opacity="0.90"/>
<circle cx="961.0" cy="440.9" r="2.6" fill="#fca514" opacity="0.79"/>
<circle cx="940.4" cy="419.3" r="2.7" fill="#fca514" opacity="0.83"/>
<circle cx="957.1" cy="426.5" r="1.0" fill="#fca514" opacity="0.99"/>
<circle cx="957.0" cy="451.1" r="1.9" fill="#fca514" opacity="0.52"/>
<circle cx="950.8" cy="475.0" r="1.3" fill="#fca514" opacity="0.90"/>
<circle cx="935.4" cy="398.1" r="2.3" fill="#fca514" opacity="0.62"/>
<circle cx="953.0" cy="426.9" r="1.2" fill="#fca514" opacity="0.95"/>
<circle cx="951.1" cy="533.2" r="1.7" fill="#fca514" opacity="0.88"/>
<circle cx="973.4" cy="442.7" r="1.8" fill="#fca514" opacity="0.59"/>
<circle cx="965.7" cy="468.4" r="1.5" fill="#fca514" opacity="0.83"/>
<circle cx="966.7" cy="502.4" r="1.8" fill="#fca514" opacity="0.92"/>
<circle cx="964.0" cy="487.6" r="2.7" fill="#fca514" opacity="0.59"/>
<circle cx="950.8" cy="501.9" r="2.0" fill="#fca514" opacity="0.62"/>
<circle cx="968.0" cy="451.1" r="2.4" fill="#fca514" opacity="0.90"/>
<circle cx="949.1" cy="420.4" r="1.2" fill="#fca514" opacity="0.79"/>
<circle cx="936.6" cy="459.8" r="2.0" fill="#fca514" opacity="0.86"/>
<circle cx="976.5" cy="470.9" r="1.2" fill="#fca514" opacity="0.58"/>
<circle cx="942.9" cy="387.7" r="1.7" fill="#fca514" opacity="0.72"/>
<circle cx="963.8" cy="424.4" r="0.9" fill="#fca514" opacity="0.95"/>
<circle cx="961.5" cy="470.3" r="2.4" fill="#fca514" opacity="0.62"/>
<circle cx="938.4" cy="406.9" r="0.9" fill="#fca514" opacity="0.66"/>
<circle cx="962.3" cy="478.2" r="1.3" fill="#fca514" opacity="0.79"/>
<circle cx="959.6" cy="398.3" r="1.1" fill="#fca514" opacity="0.63"/>
<circle cx="955.9" cy="409.0" r="2.5" fill="#fca514" opacity="0.89"/>
<circle cx="940.3" cy="394.2" r="1.5" fill="#fca514" opacity="0.61"/>
<circle cx="951.0" cy="530.6" r="1.8" fill="#fca514" opacity="0.88"/>
<circle cx="956.1" cy="532.9" r="1.7" fill="#fca514" opacity="0.87"/>
<circle cx="932.0" cy="390.9" r="2.6" fill="#fca514" opacity="0.57"/>
<circle cx="945.2" cy="443.9" r="1.6" fill="#fca514" opacity="0.54"/>
<circle cx="965.9" cy="390.1" r="2.3" fill="#fca514" opacity="0.87"/>
<circle cx="938.3" cy="419.5" r="1.9" fill="#fca514" opacity="0.62"/>
<circle cx="975.8" cy="454.2" r="1.5" fill="#fca514" opacity="0.67"/>
<circle cx="976.9" cy="532.2" r="0.9" fill="#fca514" opacity="0.70"/>
<circle cx="942.1" cy="482.5" r="1.5" fill="#fca514" opacity="0.85"/>
<circle cx="972.5" cy="514.7" r="2.6" fill="#fca514" opacity="0.73"/>
<circle cx="969.7" cy="443.9" r="1.6" fill="#fca514" opacity="0.89"/>
<circle cx="942.1" cy="417.3" r="1.2" fill="#fca514" opacity="0.77"/>
<circle cx="934.1" cy="409.6" r="1.2" fill="#fca514" opacity="0.73"/>
<circle cx="949.4" cy="431.3" r="2.8" fill="#fca514" opacity="0.84"/>
<circle cx="955.1" cy="514.4" r="1.6" fill="#fca514" opacity="0.54"/>
<circle cx="957.1" cy="488.7" r="1.3" fill="#fca514" opacity="0.51"/>
<circle cx="937.3" cy="412.3" r="1.6" fill="#fca514" opacity="0.96"/>
<circle cx="953.5" cy="492.3" r="1.5" fill="#fca514" opacity="0.58"/>
<circle cx="964.3" cy="525.5" r="2.3" fill="#fca514" opacity="0.86"/>
<circle cx="948.1" cy="521.1" r="1.4" fill="#fca514" opacity="0.69"/>
<circle cx="962.2" cy="397.5" r="1.5" fill="#fca514" opacity="0.89"/>
<circle cx="938.0" cy="462.9" r="1.6" fill="#fca514" opacity="0.62"/>
<circle cx="928.0" cy="391.1" r="2.0" fill="#fca514" opacity="0.52"/>
<circle cx="948.5" cy="431.8" r="1.9" fill="#fca514" opacity="0.57"/>
<circle cx="952.9" cy="491.0" r="2.3" fill="#fca514" opacity="0.83"/>
<circle cx="933.6" cy="407.1" r="1.4" fill="#fca514" opacity="0.86"/>
<circle cx="949.6" cy="445.8" r="2.5" fill="#fca514" opacity="0.61"/>
<circle cx="944.3" cy="428.8" r="1.2" fill="#fca514" opacity="0.52"/>
<circle cx="949.1" cy="388.7" r="1.9" fill="#fca514" opacity="0.90"/>
<circle cx="962.7" cy="531.3" r="2.1" fill="#fca514" opacity="0.96"/>
<circle cx="957.5" cy="417.4" r="2.1" fill="#fca514" opacity="0.98"/>
<circle cx="956.6" cy="515.3" r="2.1" fill="#fca514" opacity="0.54"/>
<circle cx="950.5" cy="449.2" r="0.9" fill="#fca514" opacity="0.69"/>
<circle cx="952.2" cy="434.2" r="1.4" fill="#fca514" opacity="0.58"/>
<circle cx="953.5" cy="445.4" r="1.1" fill="#fca514" opacity="0.83"/>
<circle cx="931.4" cy="421.0" r="1.5" fill="#fca514" opacity="0.71"/>
<circle cx="950.7" cy="407.6" r="2.2" fill="#fca514" opacity="0.78"/>
<circle cx="942.0" cy="490.0" r="1.6" fill="#fca514" opacity="0.68"/>
<circle cx="940.1" cy="394.4" r="0.9" fill="#fca514" opacity="0.75"/>
<circle cx="958.7" cy="472.9" r="1.5" fill="#fca514" opacity="0.63"/>
<circle cx="936.3" cy="388.5" r="2.6" fill="#fca514" opacity="0.78"/>
<circle cx="957.9" cy="424.3" r="1.2" fill="#fca514" opacity="0.73"/>
<circle cx="981.4" cy="477.3" r="1.5" fill="#fca514" opacity="0.79"/>
<circle cx="983.0" cy="526.4" r="2.1" fill="#fca514" opacity="0.81"/>
<circle cx="951.0" cy="446.6" r="1.4" fill="#fca514" opacity="0.91"/>
<circle cx="963.6" cy="517.0" r="2.6" fill="#fca514" opacity="0.52"/>
<circle cx="946.9" cy="405.4" r="1.4" fill="#fca514" opacity="0.68"/>
<circle cx="956.1" cy="531.5" r="1.2" fill="#fca514" opacity="0.61"/>
<circle cx="951.0" cy="487.0" r="0.8" fill="#fca514" opacity="0.77"/>
<circle cx="942.6" cy="444.1" r="1.8" fill="#fca514" opacity="0.83"/>
<circle cx="964.5" cy="467.2" r="1.9" fill="#fca514" opacity="0.92"/>
<circle cx="964.1" cy="530.3" r="1.5" fill="#fca514" opacity="0.94"/>
<circle cx="961.6" cy="432.0" r="2.2" fill="#fca514" opacity="0.84"/>
<circle cx="986.0" cy="529.6" r="1.1" fill="#fca514" opacity="0.81"/>
<circle cx="960.1" cy="458.6" r="1.5" fill="#fca514" opacity="0.64"/>
<circle cx="966.5" cy="497.3" r="1.3" fill="#fca514" opacity="0.62"/>
<circle cx="937.7" cy="433.7" r="1.8" fill="#fca514" opacity="0.56"/>
<circle cx="925.0" cy="394.5" r="1.0" fill="#fca514" opacity="0.85"/>
<circle cx="943.7" cy="401.9" r="2.3" fill="#fca514" opacity="0.74"/>
<circle cx="963.9" cy="409.4" r="2.5" fill="#fca514" opacity="0.53"/>
<circle cx="950.5" cy="423.1" r="2.4" fill="#fca514" opacity="0.70"/>
<circle cx="952.8" cy="492.4" r="2.2" fill="#fca514" opacity="0.66"/>
<circle cx="964.2" cy="435.1" r="2.5" fill="#fca514" opacity="0.91"/>
<circle cx="956.0" cy="470.1" r="2.2" fill="#fca514" opacity="0.81"/>
<circle cx="981.0" cy="509.7" r="1.1" fill="#fca514" opacity="0.69"/>
<circle cx="966" cy="532" r="2.5" fill="#fca514"/>
<circle cx="993" cy="532" r="1.2" fill="#fca514"/>
<circle cx="1021" cy="532" r="1.3" fill="#fca514"/>
<circle cx="982" cy="567" r="3.2" fill="#fca514"/>
<circle cx="968" cy="554" r="2" fill="#fca514"/>
<circle cx="938" cy="547" r="1.5" fill="#fca514"/>
<circle cx="919" cy="565" r="2" fill="#fca514"/>
<circle cx="948" cy="570" r="1.5" fill="#fca514"/>
<circle cx="947" cy="580" r="2.4" fill="#fca514"/>
<circle cx="936" cy="595" r="1.6" fill="#fca514"/>
<circle cx="936" cy="625" r="1.5" fill="#fca514"/>
<circle cx="945" cy="643" r="1.5" fill="#fca514"/>
<circle cx="955" cy="640" r="3" fill="#fca514"/>
<circle cx="968" cy="620" r="2.4" fill="#fca514"/>
<circle cx="985" cy="611" r="2.8" fill="#fca514"/>
<circle cx="1000" cy="603" r="1.5" fill="#fca514"/>
<circle cx="1016" cy="628" r="1" fill="#fca514"/>
<circle cx="1004" cy="626" r="1" fill="#fca514"/>
<circle cx="993" cy="637" r="1.2" fill="#fca514"/>
<circle cx="983" cy="630" r="1" fill="#fca514"/>
<circle cx="960" cy="608" r="1.3" fill="#fca514"/>
<circle cx="952" cy="626" r="1.1" fill="#fca514"/>
<circle cx="975" cy="613" r="1.2" fill="#fca514"/>
<circle cx="1009" cy="601" r="1" fill="#fca514"/>
<circle cx="960" cy="548" r="1.2" fill="#fca514"/>
<circle cx="990" cy="568" r="1" fill="#fca514"/>
<circle cx="1003" cy="647" r="3" fill="#fca514"/>
<circle cx="1004" cy="654" r="2.5" fill="#fca514"/>
<circle cx="983" cy="657" r="3" fill="#fca514"/>
<circle cx="981" cy="662" r="2.6" fill="#fca514"/>
<circle cx="977" cy="665" r="2.4" fill="#fca514"/>
<circle cx="973" cy="656" r="2" fill="#fca514"/>
<circle cx="964" cy="661" r="2" fill="#fca514"/>
<circle cx="948" cy="660" r="2.5" fill="#fca514"/>
<circle cx="940" cy="664" r="3" fill="#fca514"/>
<circle cx="925" cy="670" r="2.5" fill="#fca514"/>
<circle cx="920" cy="665" r="2" fill="#fca514"/>
<circle cx="908" cy="668" r="2" fill="#fca514"/>
<circle cx="897" cy="672" r="2.3" fill="#fca514"/>
<circle cx="939" cy="676" r="1.8" fill="#fca514"/>
<circle cx="919" cy="678" r="2.2" fill="#fca514"/>
<circle cx="904" cy="674" r="1.8" fill="#fca514"/>
<circle cx="893" cy="680" r="1.6" fill="#fca514"/>
<circle cx="958" cy="665" r="1.5" fill="#fca514"/>
<circle cx="990" cy="660" r="2" fill="#fca514"/>
<circle cx="997" cy="651" r="1.6" fill="#fca514"/>
<circle cx="1012" cy="648" r="1.3" fill="#fca514"/>
<circle cx="930" cy="667" r="1.5" fill="#fca514"/>
<circle cx="912" cy="676" r="1.5" fill="#fca514"/>
<circle cx="955" cy="672" r="1.2" fill="#fca514"/>
<circle cx="862" cy="551" r="2.6" fill="#ff4a10"/>
<circle cx="880" cy="616" r="2.8" fill="#ff4a10"/>
<circle cx="820" cy="545" r="2.2" fill="#ff4a10"/>
<circle cx="815" cy="538" r="3" fill="#ff4a10"/>
<circle cx="845" cy="622" r="1.5" fill="#ff4a10"/>
<g filter="url(#b15)"><circle cx="608" cy="667" r="4.5" fill="#fb7420"/><circle cx="620" cy="673" r="5.4" fill="#fb7420"/><circle cx="615.6" cy="685" r="5.8" fill="#fb7420"/><circle cx="609.5" cy="677.5" r="4.8" fill="#fb7420"/><path d="M616,688 L626,698 L634,712" stroke="#fc7c22" stroke-width="6" fill="none" stroke-linecap="round"/><path d="M633,710 L641,728 L645,745 L644,758" stroke="#fc7c22" stroke-width="8.5" fill="none" stroke-linecap="round"/><circle cx="645" cy="772" r="7" fill="#f5561a"/><circle cx="637" cy="760" r="5" fill="#f5501a"/><circle cx="649" cy="763" r="4.5" fill="#f5501a"/><circle cx="641.6" cy="772" r="6" fill="#f85a1a"/><circle cx="643" cy="783" r="6" fill="#f85a1a"/><circle cx="660" cy="777" r="4.8" fill="#f5581a"/><circle cx="657" cy="786" r="4" fill="#e8501a"/><circle cx="649" cy="788" r="4" fill="#e8501a"/><path d="M655,790 L640,798 L620,805 L603,810" stroke="#a83010" stroke-width="4.5" fill="none" stroke-linecap="round" opacity="0.8"/></g>
<ellipse cx="806" cy="861" rx="8" ry="7" transform="rotate(0 806 861)" fill="#e85a12" opacity="0.95" filter="url(#b5)"/>
<ellipse cx="698" cy="899" rx="7" ry="6" transform="rotate(0 698 899)" fill="#9a2008" opacity="0.85" filter="url(#b5)"/>
<ellipse cx="819" cy="887" rx="9" ry="5.5" transform="rotate(-30 819 887)" fill="#8a2008" opacity="0.75" filter="url(#b5)"/>
<ellipse cx="781" cy="906" rx="9" ry="5.5" transform="rotate(-25 781 906)" fill="#8a2008" opacity="0.75" filter="url(#b5)"/>
<ellipse cx="751" cy="923" rx="7" ry="5" transform="rotate(-30 751 923)" fill="#6a1806" opacity="0.6" filter="url(#b5)"/>
<ellipse cx="728" cy="933" rx="8" ry="7" transform="rotate(-20 728 933)" fill="#b02a0a" opacity="0.85" filter="url(#b5)"/>
<ellipse cx="713" cy="967" rx="8" ry="10" transform="rotate(15 713 967)" fill="#c02a0a" opacity="0.9" filter="url(#b5)"/>
<ellipse cx="710" cy="991" rx="8" ry="8" transform="rotate(0 710 991)" fill="#8a1c06" opacity="0.8" filter="url(#b5)"/>
<ellipse cx="855" cy="869" rx="7" ry="4" transform="rotate(-20 855 869)" fill="#4a1004" opacity="0.5" filter="url(#b5)"/>
<ellipse cx="668" cy="768" rx="4" ry="4" transform="rotate(0 668 768)" fill="#5a1a08" opacity="0.3" filter="url(#b5)"/></g>
<g transform="translate(2048,0) scale(-1,1)"><path d="M846.6,329.6 L851.5,325.7 L869.0,329.6 L884.7,335.5 L898.4,330.6 L904.2,329.6 L908.0,340.4 L913.0,343.3 L907.0,352.0 L907.0,363.8 L914.0,373.6 L916.0,383.4 L920.0,395.0 L923.0,415.0 L925.0,440.0 L933.0,462.0 L952.0,490.0 L963.0,520.0 L900.0,527.0 L836.0,524.0 L832.0,500.0 L838.0,465.0 L850.0,432.0 L862.0,404.8 L859.3,401.0 L867.0,396.0 L861.3,391.2 L857.3,378.5 L849.5,363.8 L844.6,344.3 Z" fill="#fca514" filter="url(#b2)"/>
<path d="M790.7,529.7 L786.2,546.8 L782.6,568.4 L787.1,584.6 L797.0,600.8 L809.6,611.5 L824.0,622.3 L829.4,635.0 L845.6,644.0 L850.0,653.0 L851.0,671.0 L851.0,690.7 L860.0,698.0 L874.4,694.3 L887.0,680.0 L885.0,667.3 L874.4,656.5 L863.6,647.5 L854.6,636.7 L845.6,629.5 L827.6,617.0 L815.0,604.4 L806.0,593.6 L802.4,579.0 L806.0,568.4 L813.2,557.6 L822.2,546.8 L833.0,539.6 L845.6,532.4 L860.0,527.0 L870.8,525.2 L885.0,523.4 L914.0,536.0 L924.7,530.6 L939.0,510.8 L941.0,500.0 L870.8,500.0 L833.0,516.0 L806.0,525.0 Z" fill="#fba012" filter="url(#b1)"/>
<path d="M878.0,532.4 L899.5,536.0 L914.0,546.8 L908.5,564.8 L899.5,575.6 L896.0,590.0 L894.0,608.0 L887.0,626.0 L881.5,640.3 L870.8,647.5 L860.0,636.7 L856.4,626.0 L860.0,608.0 L860.0,586.4 L867.0,572.0 L874.4,554.0 L876.2,541.4 Z" fill="#f7a012" filter="url(#b1)"/>
<circle cx="882.1" cy="597.2" r="1.9" fill="#000"/>
<circle cx="882.9" cy="590.9" r="1.4" fill="#000"/>
<circle cx="866.1" cy="591.4" r="1.5" fill="#000"/>
<circle cx="902.6" cy="541.3" r="1.0" fill="#000"/>
<circle cx="860.4" cy="627.2" r="1.6" fill="#000"/>
<circle cx="891.9" cy="548.9" r="0.6" fill="#000"/>
<circle cx="886.7" cy="537.1" r="0.9" fill="#000"/>
<circle cx="882.8" cy="582.9" r="1.8" fill="#000"/>
<circle cx="886.1" cy="606.8" r="1.3" fill="#000"/>
<circle cx="894.7" cy="584.9" r="1.0" fill="#000"/>
<circle cx="873.9" cy="557.6" r="1.0" fill="#000"/>
<circle cx="859.2" cy="622.0" r="1.2" fill="#000"/>
<circle cx="901.7" cy="562.4" r="0.7" fill="#000"/>
<circle cx="900.5" cy="544.2" r="0.9" fill="#000"/>
<circle cx="902.8" cy="551.3" r="1.4" fill="#000"/>
<circle cx="881.8" cy="552.9" r="1.6" fill="#000"/>
<circle cx="862.9" cy="607.2" r="0.8" fill="#000"/>
<circle cx="880.2" cy="555.5" r="1.0" fill="#000"/>
<circle cx="873.2" cy="636.2" r="0.9" fill="#000"/>
<circle cx="878.7" cy="632.5" r="1.5" fill="#000"/>
<circle cx="901.4" cy="569.5" r="1.0" fill="#000"/>
<circle cx="890.0" cy="559.2" r="1.4" fill="#000"/>
<circle cx="877.3" cy="584.4" r="1.9" fill="#000"/>
<circle cx="884.0" cy="598.9" r="1.8" fill="#000"/>
<circle cx="880.3" cy="542.5" r="0.7" fill="#000"/>
<circle cx="897.3" cy="560.8" r="1.8" fill="#000"/>
<circle cx="890.8" cy="565.2" r="0.8" fill="#000"/>
<circle cx="898.2" cy="538.3" r="0.9" fill="#000"/>
<circle cx="872.3" cy="670.5" r="1.2" fill="#000"/>
<circle cx="790.0" cy="535.3" r="0.9" fill="#000"/>
<circle cx="859.6" cy="646.1" r="0.9" fill="#000"/>
<circle cx="880.5" cy="516.0" r="1.2" fill="#000"/>
<circle cx="852.7" cy="667.7" r="0.6" fill="#000"/>
<circle cx="903.8" cy="506.0" r="1.2" fill="#000"/>
<circle cx="881.4" cy="684.1" r="0.8" fill="#000"/>
<circle cx="851.1" cy="661.2" r="1.5" fill="#000"/>
<circle cx="802.5" cy="599.3" r="1.4" fill="#000"/>
<circle cx="825.4" cy="542.8" r="1.0" fill="#000"/>
<circle cx="944.8" cy="496.9" r="1.3" fill="#000" opacity="0.85"/>
<circle cx="961.4" cy="512.9" r="1.6" fill="#000" opacity="0.85"/>
<circle cx="929.1" cy="455.6" r="2.3" fill="#000" opacity="0.85"/>
<circle cx="952.1" cy="453.1" r="1.8" fill="#000" opacity="0.85"/>
<circle cx="954.9" cy="473.2" r="0.8" fill="#000" opacity="0.85"/>
<circle cx="943.5" cy="460.2" r="0.8" fill="#000" opacity="0.85"/>
<circle cx="936.1" cy="512.2" r="1.0" fill="#000" opacity="0.85"/>
<circle cx="949.4" cy="453.5" r="1.6" fill="#000" opacity="0.85"/>
<circle cx="950.3" cy="497.2" r="2.2" fill="#000" opacity="0.85"/>
<circle cx="951.3" cy="521.9" r="1.1" fill="#000" opacity="0.85"/>
<circle cx="934.1" cy="485.6" r="0.8" fill="#000" opacity="0.85"/>
<circle cx="952.3" cy="485.4" r="1.1" fill="#000" opacity="0.85"/>
<circle cx="939.8" cy="470.4" r="2.0" fill="#000" opacity="0.85"/>
<circle cx="948.9" cy="489.0" r="2.1" fill="#000" opacity="0.85"/>
<circle cx="954.9" cy="479.5" r="2.3" fill="#000" opacity="0.85"/>
<circle cx="959.7" cy="456.5" r="2.0" fill="#000" opacity="0.85"/>
<circle cx="943.4" cy="459.7" r="1.9" fill="#000" opacity="0.85"/>
<circle cx="940.8" cy="518.2" r="1.8" fill="#000" opacity="0.85"/>
<circle cx="955.1" cy="515.9" r="2.4" fill="#000" opacity="0.85"/>
<circle cx="950.1" cy="484.8" r="1.1" fill="#000" opacity="0.85"/>
<circle cx="955.8" cy="504.1" r="1.9" fill="#000" opacity="0.85"/>
<circle cx="935.3" cy="503.8" r="2.3" fill="#000" opacity="0.85"/>
<circle cx="961.2" cy="523.5" r="1.7" fill="#000" opacity="0.85"/>
<circle cx="938.9" cy="509.3" r="2.3" fill="#000" opacity="0.85"/>
<circle cx="939.8" cy="514.2" r="0.9" fill="#000" opacity="0.85"/>
<circle cx="946.7" cy="483.1" r="2.1" fill="#000" opacity="0.85"/>
<circle cx="929.0" cy="486.6" r="2.2" fill="#000" opacity="0.85"/>
<circle cx="955.2" cy="454.8" r="1.1" fill="#000" opacity="0.85"/>
<circle cx="954.8" cy="475.1" r="1.0" fill="#000" opacity="0.85"/>
<circle cx="945.6" cy="461.2" r="2.0" fill="#000" opacity="0.85"/>
<circle cx="848" cy="570" r="4.5" fill="#f8a012"/>
<circle cx="836" cy="562" r="2.5" fill="#f8a012"/>
<circle cx="842" cy="600" r="3" fill="#f8a012"/>
<circle cx="830" cy="590" r="2" fill="#f8a012"/>
<circle cx="852" cy="548" r="3" fill="#f8a012"/>
<circle cx="827" cy="575" r="1.5" fill="#f8a012"/>
<circle cx="838" cy="612" r="2" fill="#f8a012"/>
<circle cx="815" cy="545" r="2.2" fill="#f8a012"/>
<circle cx="870" cy="540" r="3.5" fill="#f8a012"/>
<circle cx="850" cy="530" r="3" fill="#f8a012"/>
<circle cx="826" cy="552" r="1.8" fill="#f8a012"/>
<circle cx="844" cy="585" r="2.6" fill="#f8a012"/>
<circle cx="851.9" cy="527.6" r="1.4" fill="#fca514"/>
<circle cx="880.8" cy="672.4" r="2.5" fill="#fca514"/>
<circle cx="853.1" cy="678.1" r="1.9" fill="#fca514"/>
<circle cx="815.7" cy="555.1" r="1.9" fill="#fca514"/>
<circle cx="847.1" cy="669.8" r="1.7" fill="#fca514"/>
<circle cx="942.1" cy="509.7" r="2.4" fill="#fca514"/>
<circle cx="780.5" cy="579.9" r="2.5" fill="#fca514"/>
<circle cx="891.2" cy="530.6" r="2.3" fill="#fca514"/>
<circle cx="814.1" cy="555.0" r="2.2" fill="#fca514"/>
<circle cx="880.7" cy="526.2" r="1.3" fill="#fca514"/>
<circle cx="873.1" cy="654.7" r="1.6" fill="#fca514"/>
<circle cx="886.0" cy="684.6" r="1.8" fill="#fca514"/>
<circle cx="887.9" cy="523.2" r="2.4" fill="#fca514"/>
<circle cx="864.8" cy="644.2" r="1.3" fill="#fca514"/>
<circle cx="828.3" cy="538.4" r="3.2" fill="#fca514"/>
<circle cx="934.5" cy="502.8" r="2.6" fill="#fca514"/>
<circle cx="846.3" cy="640.6" r="3.3" fill="#fca514"/>
<circle cx="821.5" cy="608.1" r="3.0" fill="#fca514"/>
<circle cx="874.3" cy="696.4" r="2.9" fill="#fca514"/>
<circle cx="863.7" cy="655.9" r="2.4" fill="#fca514"/>
<circle cx="842.8" cy="641.9" r="1.4" fill="#fca514"/>
<circle cx="851.7" cy="506.8" r="1.5" fill="#fca514"/>
<circle cx="914.8" cy="541.6" r="3.1" fill="#fca514"/>
<circle cx="808.1" cy="606.7" r="2.6" fill="#fca514"/>
<circle cx="853.2" cy="509.1" r="1.6" fill="#fca514"/>
<circle cx="852.2" cy="689.9" r="1.3" fill="#fca514"/>
<circle cx="863.3" cy="528.6" r="2.2" fill="#fca514"/>
<circle cx="804.1" cy="587.0" r="2.8" fill="#fca514"/>
<circle cx="857.9" cy="698.7" r="2.1" fill="#fca514"/>
<circle cx="873.1" cy="698.7" r="1.9" fill="#fca514"/>
<circle cx="819.5" cy="614.4" r="2.6" fill="#fca514"/>
<circle cx="819.8" cy="555.2" r="2.0" fill="#fca514"/>
<circle cx="875.1" cy="657.3" r="1.6" fill="#fca514"/>
<circle cx="812.6" cy="559.4" r="2.1" fill="#fca514"/>
<circle cx="838.7" cy="536.8" r="1.4" fill="#fca514"/>
<circle cx="817.3" cy="604.9" r="3.5" fill="#fca514"/>
<circle cx="793.6" cy="586.8" r="2.0" fill="#fca514"/>
<circle cx="815.4" cy="550.8" r="3.5" fill="#fca514"/>
<circle cx="883.9" cy="675.9" r="1.3" fill="#fca514"/>
<circle cx="827.9" cy="634.7" r="1.3" fill="#fca514"/>
<circle cx="871.6" cy="695.8" r="1.8" fill="#fca514"/>
<circle cx="802.2" cy="598.1" r="2.5" fill="#fca514"/>
<circle cx="827.9" cy="629.3" r="2.6" fill="#fca514"/>
<circle cx="787.1" cy="573.5" r="3.4" fill="#fca514"/>
<circle cx="898.1" cy="528.4" r="2.3" fill="#fca514"/>
<circle cx="847.5" cy="631.3" r="1.9" fill="#fca514"/>
<circle cx="857.6" cy="646.1" r="1.9" fill="#fca514"/>
<circle cx="783.6" cy="540.7" r="2.1" fill="#fca514"/>
<circle cx="805.2" cy="570.6" r="2.5" fill="#fca514"/>
<circle cx="829.3" cy="614.3" r="2.3" fill="#fca514"/>
<circle cx="889.0" cy="670.0" r="3.3" fill="#fca514"/>
<circle cx="852.6" cy="666.9" r="1.5" fill="#fca514"/>
<circle cx="827.4" cy="544.5" r="2.4" fill="#fca514"/>
<circle cx="837.3" cy="640.7" r="2.6" fill="#fca514"/>
<circle cx="811.3" cy="525.9" r="3.1" fill="#fca514"/>
<circle cx="849.6" cy="650.4" r="1.5" fill="#fca514"/>
<circle cx="829.5" cy="617.7" r="1.8" fill="#fca514"/>
<circle cx="845.3" cy="513.4" r="1.8" fill="#fca514"/>
<circle cx="878.5" cy="660.3" r="2.8" fill="#fca514"/>
<circle cx="787.2" cy="585.5" r="1.3" fill="#fca514"/>
<circle cx="849.9" cy="435.6" r="3.3" fill="#fca514"/>
<circle cx="861.7" cy="428.5" r="1.6" fill="#fca514"/>
<circle cx="822.3" cy="522.9" r="1.8" fill="#fca514"/>
<circle cx="843.1" cy="466.9" r="1.3" fill="#fca514"/>
<circle cx="832.4" cy="510.0" r="3.1" fill="#fca514"/>
<circle cx="826.5" cy="506.4" r="2.9" fill="#fca514"/>
<circle cx="844.2" cy="461.1" r="1.4" fill="#fca514"/>
<circle cx="848.7" cy="427.6" r="3.1" fill="#fca514"/>
<circle cx="837.2" cy="478.6" r="3.1" fill="#fca514"/>
<circle cx="860.8" cy="431.1" r="2.6" fill="#fca514"/>
<circle cx="835.6" cy="476.8" r="2.4" fill="#fca514"/>
<circle cx="845.7" cy="459.7" r="2.4" fill="#fca514"/>
<circle cx="823.3" cy="503.8" r="1.0" fill="#fca514"/>
<circle cx="850.7" cy="445.7" r="3.3" fill="#fca514"/>
<circle cx="837.2" cy="479.4" r="2.9" fill="#fca514"/>
<circle cx="842.5" cy="447.7" r="3.2" fill="#fca514"/>
<circle cx="849.1" cy="435.2" r="3.3" fill="#fca514"/>
<circle cx="844.5" cy="447.1" r="2.1" fill="#fca514"/>
<circle cx="845.7" cy="478.4" r="1.7" fill="#fca514"/>
<circle cx="837.1" cy="471.0" r="3.5" fill="#fca514"/>
<circle cx="846.2" cy="462.7" r="2.8" fill="#fca514"/>
<circle cx="854.9" cy="469.4" r="1.2" fill="#fca514"/>
<circle cx="839.4" cy="505.3" r="2.5" fill="#fca514"/>
<circle cx="834.1" cy="501.6" r="2.8" fill="#fca514"/>
<circle cx="844.5" cy="452.3" r="2.5" fill="#fca514"/>
<circle cx="854.7" cy="430.4" r="1.2" fill="#fca514"/>
<circle cx="849.6" cy="462.3" r="1.6" fill="#fca514"/>
<circle cx="849.5" cy="416.6" r="1.4" fill="#fca514"/>
<circle cx="858.6" cy="444.0" r="2.1" fill="#fca514"/>
<circle cx="841.2" cy="476.9" r="1.8" fill="#fca514"/>
<circle cx="839.0" cy="472.7" r="1.3" fill="#fca514"/>
<circle cx="851.9" cy="446.1" r="1.1" fill="#fca514"/>
<circle cx="845.1" cy="485.2" r="2.1" fill="#fca514"/>
<circle cx="841.0" cy="491.9" r="2.2" fill="#fca514"/>
<circle cx="826.5" cy="514.4" r="1.9" fill="#fca514"/>
<circle cx="837.3" cy="502.8" r="1.8" fill="#fca514"/>
<circle cx="845.2" cy="425.7" r="1.2" fill="#fca514"/>
<circle cx="839.4" cy="481.1" r="1.1" fill="#fca514"/>
<circle cx="838.8" cy="497.1" r="1.0" fill="#fca514"/>
<circle cx="846.0" cy="453.5" r="1.2" fill="#fca514"/>
<circle cx="842.6" cy="463.4" r="1.9" fill="#fca514"/>
<circle cx="858.0" cy="411.2" r="1.3" fill="#fca514"/>
<circle cx="832.1" cy="516.2" r="1.4" fill="#fca514"/>
<circle cx="836.2" cy="483.0" r="2.7" fill="#fca514"/>
<circle cx="843.6" cy="446.9" r="1.7" fill="#fca514"/>
<circle cx="846.6" cy="509.7" r="1.8" fill="#000" opacity="0.8"/>
<circle cx="854.6" cy="457.3" r="2.1" fill="#000" opacity="0.8"/>
<circle cx="851.8" cy="512.1" r="0.8" fill="#000" opacity="0.8"/>
<circle cx="863.7" cy="473.3" r="1.2" fill="#000" opacity="0.8"/>
<circle cx="861.6" cy="447.8" r="1.6" fill="#000" opacity="0.8"/>
<circle cx="853.8" cy="484.0" r="1.5" fill="#000" opacity="0.8"/>
<circle cx="866.6" cy="469.8" r="1.4" fill="#000" opacity="0.8"/>
<circle cx="855.7" cy="512.0" r="1.7" fill="#000" opacity="0.8"/>
<circle cx="846.8" cy="514.8" r="2.0" fill="#000" opacity="0.8"/>
<circle cx="855.2" cy="473.6" r="2.1" fill="#000" opacity="0.8"/>
<circle cx="858.6" cy="489.4" r="0.9" fill="#000" opacity="0.8"/>
<circle cx="845.7" cy="507.6" r="1.1" fill="#000" opacity="0.8"/>
<circle cx="872.4" cy="442.1" r="2.2" fill="#000" opacity="0.8"/>
<circle cx="855.2" cy="501.5" r="1.9" fill="#000" opacity="0.8"/>
<circle cx="876.9" cy="435.2" r="2.0" fill="#000" opacity="0.8"/>
<circle cx="856.0" cy="508.7" r="1.4" fill="#000" opacity="0.8"/>
<circle cx="861.6" cy="452.2" r="2.0" fill="#000" opacity="0.8"/>
<circle cx="864.7" cy="467.4" r="1.0" fill="#000" opacity="0.8"/>
<circle cx="853.1" cy="511.7" r="1.0" fill="#000" opacity="0.8"/>
<circle cx="853.3" cy="496.8" r="1.5" fill="#000" opacity="0.8"/>
<circle cx="869.7" cy="434.8" r="1.0" fill="#000" opacity="0.8"/>
<circle cx="873.1" cy="448.4" r="1.0" fill="#000" opacity="0.8"/>
<circle cx="863.2" cy="441.6" r="1.7" fill="#000" opacity="0.8"/>
<circle cx="864.4" cy="477.5" r="1.8" fill="#000" opacity="0.8"/>
<circle cx="872.6" cy="437.5" r="1.6" fill="#000" opacity="0.8"/>
<circle cx="879.5" cy="539.6" r="3.0" fill="#fca514"/>
<circle cx="906.2" cy="560.0" r="1.9" fill="#fca514"/>
<circle cx="875.0" cy="553.5" r="1.7" fill="#fca514"/>
<circle cx="908.3" cy="562.0" r="1.1" fill="#fca514"/>
<circle cx="910.1" cy="561.9" r="2.0" fill="#fca514"/>
<circle cx="904.8" cy="575.3" r="2.6" fill="#fca514"/>
<circle cx="885.6" cy="634.8" r="2.9" fill="#fca514"/>
<circle cx="891.6" cy="627.1" r="3.1" fill="#fca514"/>
<circle cx="864.5" cy="637.3" r="1.2" fill="#fca514"/>
<circle cx="888.1" cy="611.2" r="3.1" fill="#fca514"/>
<circle cx="872.6" cy="541.7" r="1.2" fill="#fca514"/>
<circle cx="903.0" cy="587.9" r="1.4" fill="#fca514"/>
<circle cx="894.8" cy="617.7" r="1.2" fill="#fca514"/>
<circle cx="882.8" cy="630.2" r="2.7" fill="#fca514"/>
<circle cx="856.4" cy="623.1" r="2.4" fill="#fca514"/>
<circle cx="898.5" cy="585.1" r="1.9" fill="#fca514"/>
<circle cx="895.7" cy="532.7" r="2.7" fill="#fca514"/>
<circle cx="881.4" cy="634.9" r="1.7" fill="#fca514"/>
<circle cx="858.5" cy="629.3" r="1.5" fill="#fca514"/>
<circle cx="858.8" cy="630.5" r="1.3" fill="#fca514"/>
<circle cx="860.6" cy="639.1" r="1.3" fill="#fca514"/>
<circle cx="890.4" cy="620.2" r="2.8" fill="#fca514"/>
<circle cx="889.5" cy="623.3" r="2.7" fill="#fca514"/>
<circle cx="899.5" cy="574.3" r="1.7" fill="#fca514"/>
<circle cx="854.9" cy="624.1" r="2.6" fill="#fca514"/>
<circle cx="879.5" cy="634.6" r="2.2" fill="#fca514"/>
<circle cx="878.5" cy="641.3" r="1.7" fill="#fca514"/>
<circle cx="891.6" cy="578.7" r="3.0" fill="#fca514"/>
<circle cx="880.3" cy="635.5" r="2.3" fill="#fca514"/>
<circle cx="913.1" cy="550.0" r="3.0" fill="#fca514"/>
<circle cx="901.9" cy="577.3" r="1.8" fill="#fca514"/>
<circle cx="876.4" cy="532.2" r="2.2" fill="#fca514"/>
<circle cx="903.9" cy="572.9" r="1.6" fill="#fca514"/>
<circle cx="863.6" cy="637.3" r="2.7" fill="#fca514"/>
<circle cx="854.5" cy="584.1" r="1.9" fill="#fca514"/>
<circle cx="862.9" cy="564.3" r="2.8" fill="#fca514"/>
<circle cx="866.8" cy="575.8" r="3.1" fill="#fca514"/>
<circle cx="859.3" cy="624.2" r="1.7" fill="#fca514"/>
<circle cx="906.9" cy="536.4" r="1.8" fill="#fca514"/>
<circle cx="854.8" cy="627.1" r="1.2" fill="#fca514"/>
<circle cx="943.8" cy="403.7" r="1.8" fill="#fca514" opacity="0.70"/>
<circle cx="952.8" cy="392.8" r="1.9" fill="#fca514" opacity="0.62"/>
<circle cx="947.0" cy="430.9" r="1.3" fill="#fca514" opacity="0.53"/>
<circle cx="990.8" cy="521.7" r="2.1" fill="#fca514" opacity="0.93"/>
<circle cx="968.9" cy="448.2" r="1.2" fill="#fca514" opacity="0.87"/>
<circle cx="977.7" cy="470.0" r="1.0" fill="#fca514" opacity="0.90"/>
<circle cx="947.9" cy="403.6" r="2.7" fill="#fca514" opacity="0.50"/>
<circle cx="940.8" cy="421.6" r="1.4" fill="#fca514" opacity="0.53"/>
<circle cx="983.5" cy="519.3" r="1.6" fill="#fca514" opacity="0.68"/>
<circle cx="939.6" cy="472.8" r="0.9" fill="#fca514" opacity="0.95"/>
<circle cx="951.7" cy="431.2" r="2.7" fill="#fca514" opacity="0.99"/>
<circle cx="943.5" cy="455.9" r="1.4" fill="#fca514" opacity="0.96"/>
<circle cx="955.7" cy="519.5" r="2.5" fill="#fca514" opacity="0.68"/>
<circle cx="941.9" cy="455.9" r="2.6" fill="#fca514" opacity="1.00"/>
<circle cx="954.5" cy="415.3" r="1.2" fill="#fca514" opacity="0.94"/>
<circle cx="926.3" cy="392.5" r="2.3" fill="#fca514" opacity="0.66"/>
<circle cx="986.1" cy="520.0" r="2.2" fill="#fca514" opacity="0.57"/>
<circle cx="983.1" cy="489.4" r="1.7" fill="#fca514" opacity="0.54"/>
<circle cx="940.5" cy="418.5" r="2.2" fill="#fca514" opacity="0.60"/>
<circle cx="936.0" cy="412.2" r="2.1" fill="#fca514" opacity="0.90"/>
<circle cx="961.0" cy="440.9" r="2.6" fill="#fca514" opacity="0.79"/>
<circle cx="940.4" cy="419.3" r="2.7" fill="#fca514" opacity="0.83"/>
<circle cx="957.1" cy="426.5" r="1.0" fill="#fca514" opacity="0.99"/>
<circle cx="957.0" cy="451.1" r="1.9" fill="#fca514" opacity="0.52"/>
<circle cx="950.8" cy="475.0" r="1.3" fill="#fca514" opacity="0.90"/>
<circle cx="935.4" cy="398.1" r="2.3" fill="#fca514" opacity="0.62"/>
<circle cx="953.0" cy="426.9" r="1.2" fill="#fca514" opacity="0.95"/>
<circle cx="951.1" cy="533.2" r="1.7" fill="#fca514" opacity="0.88"/>
<circle cx="973.4" cy="442.7" r="1.8" fill="#fca514" opacity="0.59"/>
<circle cx="965.7" cy="468.4" r="1.5" fill="#fca514" opacity="0.83"/>
<circle cx="966.7" cy="502.4" r="1.8" fill="#fca514" opacity="0.92"/>
<circle cx="964.0" cy="487.6" r="2.7" fill="#fca514" opacity="0.59"/>
<circle cx="950.8" cy="501.9" r="2.0" fill="#fca514" opacity="0.62"/>
<circle cx="968.0" cy="451.1" r="2.4" fill="#fca514" opacity="0.90"/>
<circle cx="949.1" cy="420.4" r="1.2" fill="#fca514" opacity="0.79"/>
<circle cx="936.6" cy="459.8" r="2.0" fill="#fca514" opacity="0.86"/>
<circle cx="976.5" cy="470.9" r="1.2" fill="#fca514" opacity="0.58"/>
<circle cx="942.9" cy="387.7" r="1.7" fill="#fca514" opacity="0.72"/>
<circle cx="963.8" cy="424.4" r="0.9" fill="#fca514" opacity="0.95"/>
<circle cx="961.5" cy="470.3" r="2.4" fill="#fca514" opacity="0.62"/>
<circle cx="938.4" cy="406.9" r="0.9" fill="#fca514" opacity="0.66"/>
<circle cx="962.3" cy="478.2" r="1.3" fill="#fca514" opacity="0.79"/>
<circle cx="959.6" cy="398.3" r="1.1" fill="#fca514" opacity="0.63"/>
<circle cx="955.9" cy="409.0" r="2.5" fill="#fca514" opacity="0.89"/>
<circle cx="940.3" cy="394.2" r="1.5" fill="#fca514" opacity="0.61"/>
<circle cx="951.0" cy="530.6" r="1.8" fill="#fca514" opacity="0.88"/>
<circle cx="956.1" cy="532.9" r="1.7" fill="#fca514" opacity="0.87"/>
<circle cx="932.0" cy="390.9" r="2.6" fill="#fca514" opacity="0.57"/>
<circle cx="945.2" cy="443.9" r="1.6" fill="#fca514" opacity="0.54"/>
<circle cx="965.9" cy="390.1" r="2.3" fill="#fca514" opacity="0.87"/>
<circle cx="938.3" cy="419.5" r="1.9" fill="#fca514" opacity="0.62"/>
<circle cx="975.8" cy="454.2" r="1.5" fill="#fca514" opacity="0.67"/>
<circle cx="976.9" cy="532.2" r="0.9" fill="#fca514" opacity="0.70"/>
<circle cx="942.1" cy="482.5" r="1.5" fill="#fca514" opacity="0.85"/>
<circle cx="972.5" cy="514.7" r="2.6" fill="#fca514" opacity="0.73"/>
<circle cx="969.7" cy="443.9" r="1.6" fill="#fca514" opacity="0.89"/>
<circle cx="942.1" cy="417.3" r="1.2" fill="#fca514" opacity="0.77"/>
<circle cx="934.1" cy="409.6" r="1.2" fill="#fca514" opacity="0.73"/>
<circle cx="949.4" cy="431.3" r="2.8" fill="#fca514" opacity="0.84"/>
<circle cx="955.1" cy="514.4" r="1.6" fill="#fca514" opacity="0.54"/>
<circle cx="957.1" cy="488.7" r="1.3" fill="#fca514" opacity="0.51"/>
<circle cx="937.3" cy="412.3" r="1.6" fill="#fca514" opacity="0.96"/>
<circle cx="953.5" cy="492.3" r="1.5" fill="#fca514" opacity="0.58"/>
<circle cx="964.3" cy="525.5" r="2.3" fill="#fca514" opacity="0.86"/>
<circle cx="948.1" cy="521.1" r="1.4" fill="#fca514" opacity="0.69"/>
<circle cx="962.2" cy="397.5" r="1.5" fill="#fca514" opacity="0.89"/>
<circle cx="938.0" cy="462.9" r="1.6" fill="#fca514" opacity="0.62"/>
<circle cx="928.0" cy="391.1" r="2.0" fill="#fca514" opacity="0.52"/>
<circle cx="948.5" cy="431.8" r="1.9" fill="#fca514" opacity="0.57"/>
<circle cx="952.9" cy="491.0" r="2.3" fill="#fca514" opacity="0.83"/>
<circle cx="933.6" cy="407.1" r="1.4" fill="#fca514" opacity="0.86"/>
<circle cx="949.6" cy="445.8" r="2.5" fill="#fca514" opacity="0.61"/>
<circle cx="944.3" cy="428.8" r="1.2" fill="#fca514" opacity="0.52"/>
<circle cx="949.1" cy="388.7" r="1.9" fill="#fca514" opacity="0.90"/>
<circle cx="962.7" cy="531.3" r="2.1" fill="#fca514" opacity="0.96"/>
<circle cx="957.5" cy="417.4" r="2.1" fill="#fca514" opacity="0.98"/>
<circle cx="956.6" cy="515.3" r="2.1" fill="#fca514" opacity="0.54"/>
<circle cx="950.5" cy="449.2" r="0.9" fill="#fca514" opacity="0.69"/>
<circle cx="952.2" cy="434.2" r="1.4" fill="#fca514" opacity="0.58"/>
<circle cx="953.5" cy="445.4" r="1.1" fill="#fca514" opacity="0.83"/>
<circle cx="931.4" cy="421.0" r="1.5" fill="#fca514" opacity="0.71"/>
<circle cx="950.7" cy="407.6" r="2.2" fill="#fca514" opacity="0.78"/>
<circle cx="942.0" cy="490.0" r="1.6" fill="#fca514" opacity="0.68"/>
<circle cx="940.1" cy="394.4" r="0.9" fill="#fca514" opacity="0.75"/>
<circle cx="958.7" cy="472.9" r="1.5" fill="#fca514" opacity="0.63"/>
<circle cx="936.3" cy="388.5" r="2.6" fill="#fca514" opacity="0.78"/>
<circle cx="957.9" cy="424.3" r="1.2" fill="#fca514" opacity="0.73"/>
<circle cx="981.4" cy="477.3" r="1.5" fill="#fca514" opacity="0.79"/>
<circle cx="983.0" cy="526.4" r="2.1" fill="#fca514" opacity="0.81"/>
<circle cx="951.0" cy="446.6" r="1.4" fill="#fca514" opacity="0.91"/>
<circle cx="963.6" cy="517.0" r="2.6" fill="#fca514" opacity="0.52"/>
<circle cx="946.9" cy="405.4" r="1.4" fill="#fca514" opacity="0.68"/>
<circle cx="956.1" cy="531.5" r="1.2" fill="#fca514" opacity="0.61"/>
<circle cx="951.0" cy="487.0" r="0.8" fill="#fca514" opacity="0.77"/>
<circle cx="942.6" cy="444.1" r="1.8" fill="#fca514" opacity="0.83"/>
<circle cx="964.5" cy="467.2" r="1.9" fill="#fca514" opacity="0.92"/>
<circle cx="964.1" cy="530.3" r="1.5" fill="#fca514" opacity="0.94"/>
<circle cx="961.6" cy="432.0" r="2.2" fill="#fca514" opacity="0.84"/>
<circle cx="986.0" cy="529.6" r="1.1" fill="#fca514" opacity="0.81"/>
<circle cx="960.1" cy="458.6" r="1.5" fill="#fca514" opacity="0.64"/>
<circle cx="966.5" cy="497.3" r="1.3" fill="#fca514" opacity="0.62"/>
<circle cx="937.7" cy="433.7" r="1.8" fill="#fca514" opacity="0.56"/>
<circle cx="925.0" cy="394.5" r="1.0" fill="#fca514" opacity="0.85"/>
<circle cx="943.7" cy="401.9" r="2.3" fill="#fca514" opacity="0.74"/>
<circle cx="963.9" cy="409.4" r="2.5" fill="#fca514" opacity="0.53"/>
<circle cx="950.5" cy="423.1" r="2.4" fill="#fca514" opacity="0.70"/>
<circle cx="952.8" cy="492.4" r="2.2" fill="#fca514" opacity="0.66"/>
<circle cx="964.2" cy="435.1" r="2.5" fill="#fca514" opacity="0.91"/>
<circle cx="956.0" cy="470.1" r="2.2" fill="#fca514" opacity="0.81"/>
<circle cx="981.0" cy="509.7" r="1.1" fill="#fca514" opacity="0.69"/>
<circle cx="966" cy="532" r="2.5" fill="#fca514"/>
<circle cx="993" cy="532" r="1.2" fill="#fca514"/>
<circle cx="1021" cy="532" r="1.3" fill="#fca514"/>
<circle cx="982" cy="567" r="3.2" fill="#fca514"/>
<circle cx="968" cy="554" r="2" fill="#fca514"/>
<circle cx="938" cy="547" r="1.5" fill="#fca514"/>
<circle cx="919" cy="565" r="2" fill="#fca514"/>
<circle cx="948" cy="570" r="1.5" fill="#fca514"/>
<circle cx="947" cy="580" r="2.4" fill="#fca514"/>
<circle cx="936" cy="595" r="1.6" fill="#fca514"/>
<circle cx="936" cy="625" r="1.5" fill="#fca514"/>
<circle cx="945" cy="643" r="1.5" fill="#fca514"/>
<circle cx="955" cy="640" r="3" fill="#fca514"/>
<circle cx="968" cy="620" r="2.4" fill="#fca514"/>
<circle cx="985" cy="611" r="2.8" fill="#fca514"/>
<circle cx="1000" cy="603" r="1.5" fill="#fca514"/>
<circle cx="1016" cy="628" r="1" fill="#fca514"/>
<circle cx="1004" cy="626" r="1" fill="#fca514"/>
<circle cx="993" cy="637" r="1.2" fill="#fca514"/>
<circle cx="983" cy="630" r="1" fill="#fca514"/>
<circle cx="960" cy="608" r="1.3" fill="#fca514"/>
<circle cx="952" cy="626" r="1.1" fill="#fca514"/>
<circle cx="975" cy="613" r="1.2" fill="#fca514"/>
<circle cx="1009" cy="601" r="1" fill="#fca514"/>
<circle cx="960" cy="548" r="1.2" fill="#fca514"/>
<circle cx="990" cy="568" r="1" fill="#fca514"/>
<circle cx="1003" cy="647" r="3" fill="#fca514"/>
<circle cx="1004" cy="654" r="2.5" fill="#fca514"/>
<circle cx="983" cy="657" r="3" fill="#fca514"/>
<circle cx="981" cy="662" r="2.6" fill="#fca514"/>
<circle cx="977" cy="665" r="2.4" fill="#fca514"/>
<circle cx="973" cy="656" r="2" fill="#fca514"/>
<circle cx="964" cy="661" r="2" fill="#fca514"/>
<circle cx="948" cy="660" r="2.5" fill="#fca514"/>
<circle cx="940" cy="664" r="3" fill="#fca514"/>
<circle cx="925" cy="670" r="2.5" fill="#fca514"/>
<circle cx="920" cy="665" r="2" fill="#fca514"/>
<circle cx="908" cy="668" r="2" fill="#fca514"/>
<circle cx="897" cy="672" r="2.3" fill="#fca514"/>
<circle cx="939" cy="676" r="1.8" fill="#fca514"/>
<circle cx="919" cy="678" r="2.2" fill="#fca514"/>
<circle cx="904" cy="674" r="1.8" fill="#fca514"/>
<circle cx="893" cy="680" r="1.6" fill="#fca514"/>
<circle cx="958" cy="665" r="1.5" fill="#fca514"/>
<circle cx="990" cy="660" r="2" fill="#fca514"/>
<circle cx="997" cy="651" r="1.6" fill="#fca514"/>
<circle cx="1012" cy="648" r="1.3" fill="#fca514"/>
<circle cx="930" cy="667" r="1.5" fill="#fca514"/>
<circle cx="912" cy="676" r="1.5" fill="#fca514"/>
<circle cx="955" cy="672" r="1.2" fill="#fca514"/>
<circle cx="862" cy="551" r="2.6" fill="#ff4a10"/>
<circle cx="880" cy="616" r="2.8" fill="#ff4a10"/>
<circle cx="820" cy="545" r="2.2" fill="#ff4a10"/>
<circle cx="815" cy="538" r="3" fill="#ff4a10"/>
<circle cx="845" cy="622" r="1.5" fill="#ff4a10"/>
<g filter="url(#b15)"><circle cx="608" cy="667" r="4.5" fill="#fb7420"/><circle cx="620" cy="673" r="5.4" fill="#fb7420"/><circle cx="615.6" cy="685" r="5.8" fill="#fb7420"/><circle cx="609.5" cy="677.5" r="4.8" fill="#fb7420"/><path d="M616,688 L626,698 L634,712" stroke="#fc7c22" stroke-width="6" fill="none" stroke-linecap="round"/><path d="M633,710 L641,728 L645,745 L644,758" stroke="#fc7c22" stroke-width="8.5" fill="none" stroke-linecap="round"/><circle cx="645" cy="772" r="7" fill="#f5561a"/><circle cx="637" cy="760" r="5" fill="#f5501a"/><circle cx="649" cy="763" r="4.5" fill="#f5501a"/><circle cx="641.6" cy="772" r="6" fill="#f85a1a"/><circle cx="643" cy="783" r="6" fill="#f85a1a"/><circle cx="660" cy="777" r="4.8" fill="#f5581a"/><circle cx="657" cy="786" r="4" fill="#e8501a"/><circle cx="649" cy="788" r="4" fill="#e8501a"/><path d="M655,790 L640,798 L620,805 L603,810" stroke="#a83010" stroke-width="4.5" fill="none" stroke-linecap="round" opacity="0.8"/></g>
<ellipse cx="806" cy="861" rx="8" ry="7" transform="rotate(0 806 861)" fill="#e85a12" opacity="0.95" filter="url(#b5)"/>
<ellipse cx="698" cy="899" rx="7" ry="6" transform="rotate(0 698 899)" fill="#9a2008" opacity="0.85" filter="url(#b5)"/>
<ellipse cx="819" cy="887" rx="9" ry="5.5" transform="rotate(-30 819 887)" fill="#8a2008" opacity="0.75" filter="url(#b5)"/>
<ellipse cx="781" cy="906" rx="9" ry="5.5" transform="rotate(-25 781 906)" fill="#8a2008" opacity="0.75" filter="url(#b5)"/>
<ellipse cx="751" cy="923" rx="7" ry="5" transform="rotate(-30 751 923)" fill="#6a1806" opacity="0.6" filter="url(#b5)"/>
<ellipse cx="728" cy="933" rx="8" ry="7" transform="rotate(-20 728 933)" fill="#b02a0a" opacity="0.85" filter="url(#b5)"/>
<ellipse cx="713" cy="967" rx="8" ry="10" transform="rotate(15 713 967)" fill="#c02a0a" opacity="0.9" filter="url(#b5)"/>
<ellipse cx="710" cy="991" rx="8" ry="8" transform="rotate(0 710 991)" fill="#8a1c06" opacity="0.8" filter="url(#b5)"/>
<ellipse cx="855" cy="869" rx="7" ry="4" transform="rotate(-20 855 869)" fill="#4a1004" opacity="0.5" filter="url(#b5)"/>
<ellipse cx="668" cy="768" rx="4" ry="4" transform="rotate(0 668 768)" fill="#5a1a08" opacity="0.3" filter="url(#b5)"/></g>
</svg></div>
<div class="a" style="left:226px;top:405px;width:35px;height:98px;background:#5a5080;border:1px solid #8f80dc;border-right:2px solid #8f80dc"></div>
<div class="a" style="left:237px;top:405px;width:1px;height:98px;background:#8f80dc"></div>
<div class="a" style="left:226px;top:451px;width:11px;height:4px;background:#111"></div>
<svg style="left:237px;top:405px" width="24" height="98"><circle cx="12" cy="12.2" r="5.6" fill="none" stroke="#b9afd2" stroke-width="2"/><circle cx="12" cy="12.2" r="2.2" fill="#b9afd2"/><rect x="0" y="24.0" width="24" height="1.2" fill="#8f80dc"/><path d="M3.8 44.0L10.2 32.5L12.4 34.8L17.8 29.8L18.6 31.2L12.4 41.8L9.9 39.2L5 44.8Z" fill="#b9afd2"/><rect x="0" y="47.5" width="24" height="1.2" fill="#8f80dc"/><path d="M4 58.0H11V53.5L18 60.0L11 66.5V62.0H4Z" fill="#b9afd2"/><rect x="0" y="71.5" width="24" height="1.2" fill="#8f80dc"/><circle cx="11" cy="87.0" r="5.3" fill="#b9afd2"/><path d="M12.5 82.0Q14 77.0 17 78.5Q18.5 80.0 18 83.5" fill="none" stroke="#b9afd2" stroke-width="1.8"/></svg>
<div class="a" style="left:261px;top:405px;width:134px;height:98px;background:#6e6e6e;border-top:1px solid #a8a8a8;border-bottom:2px solid #aaaaaa"></div>
<div class="a" style="left:266px;top:410px;width:114px;height:88px;background:#1a1a1a;overflow:hidden"><div class="a" style="left:13px;top:0;width:87px;height:88px;background:linear-gradient(90deg,#ff0000,#ff5a00 35%,#ff9a00 70%,#ffd400)"></div></div>
<div class="a" style="left:384px;top:406px;width:11px;height:95px;background:#9a9a9a"></div>
<div class="a" style="left:385px;top:438px;width:9px;height:13px;background:#5e5288"></div>
<div class="a" style="left:384px;top:451px;width:11px;height:5px;background:#b8b8b8"></div>
<div class="a" style="left:385px;top:456px;width:9px;height:14px;background:#5e5288"></div>
<div class="a" style="left:226px;top:504px;width:131px;height:18px;background:#252525;border:1px solid #6b6b6b"></div>
<div class="t mono" style="left:230px;top:508px;font-size:13px;color:#cfcfcf">ramp1</div>
<div class="a" style="left:359px;top:504px;width:18px;height:18px;background:#252525;border:1px solid #6b6b6b"></div>
<div class="a" style="left:363px;top:509px;width:9px;height:9px;border-radius:50%;background:#2c3d5c"></div>
<div class="a" style="left:378px;top:504px;width:17px;height:18px;background:#252525;border:1px solid #6b6b6b"></div>
<svg style="left:378px;top:504px" width="17" height="18"><path d="M8.5 3L10 7.5L14.5 9L10 10.5L8.5 15L7 10.5L2.5 9L7 7.5Z" fill="#575757"/></svg>
<div class="a" style="left:376px;top:524px;width:19px;height:18px;background:#8c4d7e;border:1px solid #d07fc4"></div>
<svg style="left:376px;top:524px" width="19" height="18"><path d="M8 4H11V9H14L9.5 14L5 9H8Z" fill="#dcdcdc"/></svg>
<div class="a" style="left:486px;top:405px;width:35px;height:98px;background:#5a5080;border:1px solid #8f80dc;border-right:2px solid #8f80dc"></div>
<div class="a" style="left:497px;top:405px;width:1px;height:98px;background:#8f80dc"></div>
<div class="a" style="left:486px;top:451px;width:11px;height:4px;background:#111"></div>
<svg style="left:497px;top:405px" width="24" height="98"><circle cx="12" cy="12.2" r="5.6" fill="none" stroke="#b9afd2" stroke-width="2"/><circle cx="12" cy="12.2" r="2.2" fill="#b9afd2"/><rect x="0" y="24.0" width="24" height="1.2" fill="#8f80dc"/><path d="M3.8 44.0L10.2 32.5L12.4 34.8L17.8 29.8L18.6 31.2L12.4 41.8L9.9 39.2L5 44.8Z" fill="#b9afd2"/><rect x="0" y="47.5" width="24" height="1.2" fill="#8f80dc"/><path d="M4 58.0H11V53.5L18 60.0L11 66.5V62.0H4Z" fill="#b9afd2"/><rect x="0" y="71.5" width="24" height="1.2" fill="#8f80dc"/><circle cx="11" cy="87.0" r="5.3" fill="#b9afd2"/><path d="M12.5 82.0Q14 77.0 17 78.5Q18.5 80.0 18 83.5" fill="none" stroke="#b9afd2" stroke-width="1.8"/></svg>
<div class="a" style="left:521px;top:405px;width:134px;height:98px;background:#6e6e6e;border-top:1px solid #a8a8a8;border-bottom:2px solid #aaaaaa"></div>
<div class="a" style="left:526px;top:410px;width:114px;height:88px;background:#1a1a1a;overflow:hidden"><div class="a" style="left:13px;top:0;width:87px;height:88px;background:linear-gradient(90deg,#ff0000,#ff5a00 35%,#ff9a00 70%,#ffd400)"></div></div>
<div class="a" style="left:644px;top:406px;width:11px;height:95px;background:#9a9a9a"></div>
<div class="a" style="left:645px;top:438px;width:9px;height:13px;background:#5e5288"></div>
<div class="a" style="left:644px;top:451px;width:11px;height:5px;background:#0a0a0a"></div>
<div class="a" style="left:645px;top:456px;width:9px;height:14px;background:#5e5288"></div>
<div class="a" style="left:486px;top:504px;width:131px;height:18px;background:#252525;border:1px solid #6b6b6b"></div>
<div class="t mono" style="left:490px;top:508px;font-size:13px;color:#cfcfcf">null1</div>
<div class="a" style="left:619px;top:504px;width:18px;height:18px;background:#252525;border:1px solid #6b6b6b"></div>
<div class="a" style="left:623px;top:509px;width:9px;height:9px;border-radius:50%;background:#2c3d5c"></div>
<div class="a" style="left:638px;top:504px;width:17px;height:18px;background:#252525;border:1px solid #6b6b6b"></div>
<svg style="left:638px;top:504px" width="17" height="18"><path d="M8.5 3L10 7.5L14.5 9L10 10.5L8.5 15L7 10.5L2.5 9L7 7.5Z" fill="#575757"/></svg>
<div class="a" style="left:395px;top:453px;width:91px;height:2px;background:#8677d2"></div>
<div class="a" style="left:486px;top:451px;width:11px;height:5px;background:#a092e8"></div>
<div class="a" style="left:745px;top:405px;width:169px;height:117px;opacity:0.8">
<div class="a" style="left:0;top:0;width:35px;height:98px;background:#70ac56;border:1px solid #a0ff70;border-right:2px solid #a0ff70"></div>
<div class="a" style="left:11px;top:0;width:1px;height:98px;background:#a0ff70"></div>
<div class="a" style="left:0;top:46px;width:11px;height:4px;background:#111"></div>
<svg style="left:11px;top:0" width="24" height="98"><circle cx="12" cy="12.2" r="5.6" fill="none" stroke="#e0f8d0" stroke-width="2"/><circle cx="12" cy="12.2" r="2.2" fill="#e0f8d0"/><rect x="0" y="24.0" width="24" height="1.2" fill="#a0ff70"/><path d="M3.8 44.0L10.2 32.5L12.4 34.8L17.8 29.8L18.6 31.2L12.4 41.8L9.9 39.2L5 44.8Z" fill="#e0f8d0"/><rect x="0" y="47.5" width="24" height="1.2" fill="#a0ff70"/><path d="M4 58.0H11V53.5L18 60.0L11 66.5V62.0H4Z" fill="#e0f8d0"/><rect x="0" y="71.5" width="24" height="1.2" fill="#a0ff70"/><circle cx="11" cy="87.0" r="5.3" fill="#e0f8d0"/><path d="M12.5 82.0Q14 77.0 17 78.5Q18.5 80.0 18 83.5" fill="none" stroke="#e0f8d0" stroke-width="1.8"/></svg>
<div class="a" style="left:35px;top:0;width:134px;height:98px;background:#8a8a8a;border-top:1px solid #d0d0d0;border-bottom:2px solid #d0d0d0"></div>
<div class="a" style="left:158px;top:1px;width:11px;height:95px;background:#c0c0c0;border-right:1px solid #ccc"></div>
<div class="a" style="left:159px;top:33px;width:9px;height:13px;background:#90c84a"></div>
<div class="a" style="left:158px;top:46px;width:11px;height:5px;background:#f0f0c0"></div>
<div class="a" style="left:159px;top:51px;width:9px;height:14px;background:#90c84a"></div>
<div class="a" style="left:0;top:99px;width:113px;height:18px;background:#1e1e1e;border:1px solid #6b6b6b"></div>
<div class="a" style="left:115px;top:99px;width:18px;height:18px;background:#1e1e1e;border:1px solid #6b6b6b"></div>
<div class="a" style="left:119px;top:104px;width:9px;height:9px;border-radius:50%;background:#2e4a2a"></div>
<div class="a" style="left:133px;top:99px;width:18px;height:18px;background:#1e1e1e;border:1px solid #6b6b6b"></div>
<div class="a" style="left:137px;top:104px;width:9px;height:9px;border-radius:50%;background:#2c3d5c"></div>
<div class="a" style="left:151px;top:99px;width:18px;height:18px;background:#1e1e1e;border:1px solid #6b6b6b"></div>
<svg style="left:151px;top:99px" width="18" height="18"><path d="M9 3L10.5 7.5L15 9L10.5 10.5L9 15L7.5 10.5L3 9L7.5 7.5Z" fill="#575757"/></svg>
</div>
<div class="a" style="left:785px;top:410px;width:114px;height:88px;background:#000;overflow:hidden"><svg style="left:0;top:0" width="114" height="88"><rect x="5.8" y="3" width="1" height="85" fill="#4a4a4a"/><rect x="25.6" y="3" width="1" height="85" fill="#4a4a4a"/><rect x="45" y="3" width="1" height="85" fill="#4a4a4a"/><rect x="64" y="3" width="1" height="85" fill="#4a4a4a"/><rect x="82.7" y="3" width="1" height="85" fill="#4a4a4a"/><rect x="102" y="3" width="1" height="85" fill="#4a4a4a"/><rect x="0" y="8.5" width="110" height="1" fill="#333"/><rect x="0" y="16.6" width="110" height="1" fill="#333"/><rect x="0" y="23.8" width="110" height="1" fill="#333"/><rect x="0" y="35.5" width="110" height="1" fill="#333"/><rect x="0" y="44.5" width="110" height="1" fill="#333"/><rect x="0" y="58.8" width="110" height="1" fill="#333"/><rect x="0" y="65" width="110" height="1" fill="#333"/><rect x="0" y="72" width="110" height="1" fill="#333"/><rect x="0" y="79.5" width="110" height="1" fill="#333"/><rect x="0" y="27" width="114" height="3" fill="#262626"/><rect x="0" y="55" width="114" height="3" fill="#262626"/><rect x="0" y="75" width="114" height="3" fill="#262626"/><path d="M2 44.5H110" stroke="#666" stroke-width="1" stroke-dasharray="4 4"/><text x="2" y="13" font-family="Liberation Mono" font-size="11.3" fill="#a4a4a4">0:9980</text><text x="2" y="22" font-family="Liberation Mono" font-size="11.3" fill="#a4a4a4">0.9960</text><text x="2" y="34.6" font-family="Liberation Mono" font-size="11.3" fill="#a4a4a4">0.5</text><text x="2" y="43.6" font-family="Liberation Mono" font-size="11.3" fill="#a4a4a4">0</text><text x="2" y="54" font-family="Liberation Mono" font-size="11.3" fill="#a4a4a4">u:Z00</text><text x="2" y="58" font-family="Liberation Mono" font-size="11.3" fill="#a4a4a4">-0:20</text><text x="2" y="66" font-family="Liberation Mono" font-size="11.3" fill="#a4a4a4">-0:40</text><text x="2" y="76" font-family="Liberation Mono" font-size="11.3" fill="#a4a4a4">1:00</text><text x="2" y="86.7" font-family="Liberation Mono" font-size="11.3" fill="#a4a4a4">0:00</text><path d="M0 23.8H56V8.5H108" stroke="#8a3cff" stroke-width="1.5" fill="none"/><circle cx="5.8" cy="23.8" r="2.5" fill="#8a3cff"/><circle cx="103" cy="8.5" r="2.5" fill="#8a3cff"/><rect x="53" y="9" width="2" height="8" fill="#8a3cff"/><path d="M0 44.5L103 30" stroke="#e040b0" stroke-width="1.2" fill="none"/><circle cx="5.8" cy="44" r="2.5" fill="#e040b0"/><circle cx="103" cy="30" r="2.5" fill="#e040b0"/><text x="51" y="35" font-family="Liberation Sans" font-size="12.5" fill="#e040b0">g</text><path d="M0 58.8H110" stroke="#e07a30" stroke-width="1.5"/><circle cx="5.8" cy="58.8" r="2.5" fill="#e8853a"/><circle cx="103" cy="58.8" r="2.5" fill="#e8853a"/><text x="51" y="56" font-family="Liberation Sans" font-size="12.5" fill="#e8853a">b</text><path d="M0 79.5H110" stroke="#7ad82a" stroke-width="1.3"/><circle cx="5.8" cy="79.5" r="2.5" fill="#8ae83a"/><circle cx="103" cy="79.5" r="2.5" fill="#8ae83a"/><text x="51" y="77" font-family="Liberation Sans" font-size="12.5" fill="#8ae83a">a</text></svg></div>
<div class="t mono" style="left:749px;top:508px;font-size:13px;color:#d0d0d0">topto1</div>
<div class="a" style="left:972px;top:405px;width:169px;height:117px;opacity:0.8">
<div class="a" style="left:0;top:0;width:35px;height:98px;background:#70ac56;border:1px solid #a0ff70;border-right:2px solid #a0ff70"></div>
<div class="a" style="left:11px;top:0;width:1px;height:98px;background:#a0ff70"></div>
<div class="a" style="left:0;top:46px;width:11px;height:4px;background:#111"></div>
<svg style="left:11px;top:0" width="24" height="98"><circle cx="12" cy="12.2" r="5.6" fill="none" stroke="#e0f8d0" stroke-width="2"/><circle cx="12" cy="12.2" r="2.2" fill="#e0f8d0"/><rect x="0" y="24.0" width="24" height="1.2" fill="#a0ff70"/><path d="M3.8 44.0L10.2 32.5L12.4 34.8L17.8 29.8L18.6 31.2L12.4 41.8L9.9 39.2L5 44.8Z" fill="#e0f8d0"/><rect x="0" y="47.5" width="24" height="1.2" fill="#a0ff70"/><path d="M4 58.0H11V53.5L18 60.0L11 66.5V62.0H4Z" fill="#e0f8d0"/><rect x="0" y="71.5" width="24" height="1.2" fill="#a0ff70"/><circle cx="11" cy="87.0" r="5.3" fill="#e0f8d0"/><path d="M12.5 82.0Q14 77.0 17 78.5Q18.5 80.0 18 83.5" fill="none" stroke="#e0f8d0" stroke-width="1.8"/></svg>
<div class="a" style="left:35px;top:0;width:134px;height:98px;background:#8a8a8a;border-top:1px solid #d0d0d0;border-bottom:2px solid #d0d0d0"></div>
<div class="a" style="left:158px;top:1px;width:11px;height:95px;background:#c0c0c0;border-right:1px solid #ccc"></div>
<div class="a" style="left:159px;top:33px;width:9px;height:13px;background:#90c84a"></div>
<div class="a" style="left:158px;top:46px;width:11px;height:5px;background:#f0f0c0"></div>
<div class="a" style="left:159px;top:51px;width:9px;height:14px;background:#90c84a"></div>
<div class="a" style="left:0;top:99px;width:113px;height:18px;background:#1e1e1e;border:1px solid #6b6b6b"></div>
<div class="a" style="left:115px;top:99px;width:18px;height:18px;background:#1e1e1e;border:1px solid #6b6b6b"></div>
<div class="a" style="left:119px;top:104px;width:9px;height:9px;border-radius:50%;background:#2e4a2a"></div>
<div class="a" style="left:133px;top:99px;width:18px;height:18px;background:#1e1e1e;border:1px solid #6b6b6b"></div>
<div class="a" style="left:137px;top:104px;width:9px;height:9px;border-radius:50%;background:#2c3d5c"></div>
<div class="a" style="left:151px;top:99px;width:18px;height:18px;background:#1e1e1e;border:1px solid #6b6b6b"></div>
<svg style="left:151px;top:99px" width="18" height="18"><path d="M9 3L10.5 7.5L15 9L10.5 10.5L9 15L7.5 10.5L3 9L7.5 7.5Z" fill="#575757"/></svg>
</div>
<div class="a" style="left:1012px;top:410px;width:114px;height:88px;background:#000;overflow:hidden"><svg style="left:0;top:0" width="114" height="88"><rect x="5.8" y="3" width="1" height="85" fill="#4a4a4a"/><rect x="25.6" y="3" width="1" height="85" fill="#4a4a4a"/><rect x="45" y="3" width="1" height="85" fill="#4a4a4a"/><rect x="64" y="3" width="1" height="85" fill="#4a4a4a"/><rect x="82.7" y="3" width="1" height="85" fill="#4a4a4a"/><rect x="102" y="3" width="1" height="85" fill="#4a4a4a"/><rect x="0" y="8.5" width="110" height="1" fill="#333"/><rect x="0" y="16.6" width="110" height="1" fill="#333"/><rect x="0" y="23.8" width="110" height="1" fill="#333"/><rect x="0" y="35.5" width="110" height="1" fill="#333"/><rect x="0" y="44.5" width="110" height="1" fill="#333"/><rect x="0" y="58.8" width="110" height="1" fill="#333"/><rect x="0" y="65" width="110" height="1" fill="#333"/><rect x="0" y="72" width="110" height="1" fill="#333"/><rect x="0" y="79.5" width="110" height="1" fill="#333"/><rect x="0" y="27" width="114" height="3" fill="#262626"/><rect x="0" y="55" width="114" height="3" fill="#262626"/><rect x="0" y="75" width="114" height="3" fill="#262626"/><path d="M2 44.5H110" stroke="#666" stroke-width="1" stroke-dasharray="4 4"/><text x="2" y="13" font-family="Liberation Mono" font-size="11.3" fill="#a4a4a4">0:9980</text><text x="2" y="22" font-family="Liberation Mono" font-size="11.3" fill="#a4a4a4">0.9960</text><text x="2" y="34.6" font-family="Liberation Mono" font-size="11.3" fill="#a4a4a4">0.5</text><text x="2" y="43.6" font-family="Liberation Mono" font-size="11.3" fill="#a4a4a4">0</text><text x="2" y="54" font-family="Liberation Mono" font-size="11.3" fill="#a4a4a4">u:Z00</text><text x="2" y="58" font-family="Liberation Mono" font-size="11.3" fill="#a4a4a4">-0:20</text><text x="2" y="66" font-family="Liberation Mono" font-size="11.3" fill="#a4a4a4">-0:40</text><text x="2" y="76" font-family="Liberation Mono" font-size="11.3" fill="#a4a4a4">1:00</text><text x="2" y="86.7" font-family="Liberation Mono" font-size="11.3" fill="#a4a4a4">0:00</text><path d="M0 23.8H56V8.5H108" stroke="#8a3cff" stroke-width="1.5" fill="none"/><circle cx="5.8" cy="23.8" r="2.5" fill="#8a3cff"/><circle cx="103" cy="8.5" r="2.5" fill="#8a3cff"/><rect x="53" y="9" width="2" height="8" fill="#8a3cff"/><path d="M0 44.5L103 30" stroke="#e040b0" stroke-width="1.2" fill="none"/><circle cx="5.8" cy="44" r="2.5" fill="#e040b0"/><circle cx="103" cy="30" r="2.5" fill="#e040b0"/><text x="51" y="35" font-family="Liberation Sans" font-size="12.5" fill="#e040b0">g</text><path d="M0 58.8H110" stroke="#e07a30" stroke-width="1.5"/><circle cx="5.8" cy="58.8" r="2.5" fill="#e8853a"/><circle cx="103" cy="58.8" r="2.5" fill="#e8853a"/><text x="51" y="56" font-family="Liberation Sans" font-size="12.5" fill="#e8853a">b</text><path d="M0 79.5H110" stroke="#7ad82a" stroke-width="1.3"/><circle cx="5.8" cy="79.5" r="2.5" fill="#8ae83a"/><circle cx="103" cy="79.5" r="2.5" fill="#8ae83a"/><text x="51" y="77" font-family="Liberation Sans" font-size="12.5" fill="#8ae83a">a</text></svg></div>
<div class="t mono" style="left:976px;top:508px;font-size:13px;color:#d0d0d0">color</div>
<div class="a" style="left:914px;top:452px;width:58px;height:2px;background:#6cc04a"></div>
<div class="a" style="left:972px;top:450px;width:12px;height:6px;background:#e8e878"></div>
<svg style="left:655px;top:458px" width="90" height="10"><path d="M0 5H90" stroke="#8c9cb0" stroke-width="1.2" stroke-dasharray="1.5 2.5"/><path d="M57 0.5L66 5L57 9.5Z" fill="#8090a6"/></svg>
<!-- particlesGpu node -->
<div class="a" style="left:866px;top:795px;width:397px;height:246px;border:3px solid #1cf51c;border-bottom:none;background:#0a2a0a"></div>
<div class="a" style="left:869px;top:798px;width:391px;height:243px;border:3px solid #0e3c0e;border-bottom:none;background:#000"></div>
<div class="a" style="left:875px;top:803px;width:379px;height:11px;background:#2a2a2a;border-top:1px solid #3a3a3a"></div>
<div class="a" style="left:1063px;top:803px;width:6px;height:11px;background:#000"></div>
<div class="a" style="left:875px;top:814px;width:379px;height:197px;background:#7c157f"></div>
<div class="a" style="left:886px;top:814px;width:23px;height:197px;background:#2b2b2b"></div>
<div class="a" style="left:909px;top:814px;width:334px;height:197px;background:#5a1a60;border:3px solid #7c157f"></div>
<div class="a" style="left:915px;top:821px;width:324px;height:184px;background:#000;border:1px solid #2a2a3a"></div>
<!-- left input connectors -->
<div class="a" style="left:875px;top:842px;width:11px;height:12px;background:#6a5e92;border-bottom:2px solid #111"></div>
<div class="a" style="left:875px;top:857px;width:11px;height:28px;background:#6a5e92;border-bottom:2px solid #111"></div>
<div class="a" style="left:875px;top:885px;width:11px;height:28px;background:#6a5e92;border-bottom:2px solid #111"></div>
<div class="a" style="left:875px;top:914px;width:11px;height:27px;background:#6a5e92;border-bottom:2px solid #111"></div>
<div class="a" style="left:875px;top:943px;width:11px;height:27px;background:#6a5e92;border-bottom:2px solid #111"></div>
<div class="a" style="left:875px;top:972px;width:11px;height:13px;background:#6a5e92"></div>
<!-- right output connectors -->
<div class="a" style="left:1243px;top:854px;width:11px;height:60px;background:#6a5e92;border-bottom:2px solid #111"></div>
<div class="a" style="left:1243px;top:870px;width:11px;height:5px;background:#a8a8a8"></div>
<div class="a" style="left:1243px;top:915px;width:11px;height:18px;background:#6a5e92;border-bottom:2px solid #111"></div>
<div class="a" style="left:1243px;top:933px;width:11px;height:21px;background:#5e8a40;border-bottom:2px solid #111"></div>
<div class="a" style="left:1243px;top:954px;width:11px;height:21px;background:#5e8a40"></div>
<div class="a" style="left:875px;top:1011px;width:379px;height:11px;background:#2a2a2a"></div>
<div class="a" style="left:1063px;top:1011px;width:6px;height:11px;background:#000"></div>
<div class="a" style="left:875px;top:1023px;width:364px;height:18px;background:#1c1c1c;border:1px solid #555;border-bottom:none"></div>
<div class="a" style="left:1238px;top:1023px;width:16px;height:18px;background:#2a2a2a;border:1px solid #555;border-bottom:none"></div>
<svg style="left:1238px;top:1023px" width="16" height="18"><path d="M8 4L9.3 8L13 9.5L9.3 11L8 15L6.7 11L3 9.5L6.7 8Z" fill="#5a5a5a"/></svg>
<div class="t mono" style="left:878px;top:1026px;font-size:13px;color:#d0d0d0">particlesGpu</div>

<svg style="left:886px;top:814px" width="24" height="98"><circle cx="12" cy="12.2" r="5.6" fill="none" stroke="#a8a8a8" stroke-width="2"/><circle cx="12" cy="12.2" r="2.2" fill="#a8a8a8"/><rect x="0" y="24.0" width="24" height="1.2" fill="#333"/><path d="M3.8 44.5L10.2 33.0L12.4 35.2L17.8 30.2L18.6 31.8L12.4 42.2L9.9 39.8L5 45.2Z" fill="#a8a8a8"/><rect x="0" y="48.5" width="24" height="1.2" fill="#333"/><path d="M6.5 55.5L17.5 66.5M17.5 55.5L6.5 66.5" stroke="#a8a8a8" stroke-width="3"/><rect x="0" y="72.5" width="24" height="1.2" fill="#333"/><circle cx="11" cy="87.0" r="5.3" fill="#a8a8a8"/><path d="M12.5 82.0Q14 77.0 17 78.5Q18.5 80.0 18 83.5" fill="none" stroke="#a8a8a8" stroke-width="1.8"/></svg>
<div class="a" style="left:915px;top:821px;width:324px;height:184px;overflow:hidden"><svg style="left:-915px;top:-821px" width="2048" height="1112">
<defs><filter id="pb" x="-20%" y="-20%" width="140%" height="140%"><feGaussianBlur stdDeviation="0.8"/></filter></defs>
<path d="M1015,864.6 L1037.6,868.7 L1043.5,884.9 L1050.7,877.7 L1069.8,868.2 L1084,862.2 L1100.8,877.7 L1112.7,887.3 L1117.5,904 L1134,920.6 L1110.3,927.8 L1074.5,930.2 L1026.9,937.3 L1017.3,935 L1012.6,923 L993.5,915.9 L992.3,910 L1003,904 L1026.9,894.4 L1026.9,880Z" fill="#f5a010" opacity="0.12" filter="url(#pb)"/>
<path d="M1015,865 L1036,866 L1038,872 L1044,886 L1046,899 L1040,902 L1030,895 L1024,884 Z" fill="#f8a812" filter="url(#pb)"/>
<path d="M1052,876 L1068,869 L1083,864 L1086,862 L1092,870 L1098,877 L1097,882 L1088,889 L1078,891 L1060,895 L1055,890 Z" fill="#f8ac14" filter="url(#pb)"/>
<path d="M1075,886 L1090,884 L1085,892 Z" fill="#e8c010" filter="url(#pb)"/>
<path d="M992,914 Q1012,903 1043,897" stroke="#f8a012" stroke-width="5" fill="none" filter="url(#pb)"/>
<path d="M1016,925 L1027,922 L1030,936 L1018,937Z" fill="#f8a012" filter="url(#pb)"/>
<path d="M1097,886 L1115,904 L1134,920" stroke="#f0a010" stroke-width="5" fill="none" stroke-dasharray="3 1.5" opacity="0.85" filter="url(#pb)"/>
<path d="M1030,932 Q1080,927 1130,921" stroke="#f0a010" stroke-width="2" fill="none" stroke-dasharray="2 2.5" opacity="0.8"/>
<path d="M1000,912 L1018,920 L1030,905" stroke="#f0a010" stroke-width="3" fill="none" stroke-dasharray="2 1.5" opacity="0.7"/>
<circle cx="1049.5" cy="913.8" r="0.7" fill="#f0a010" opacity="0.8"/>
<circle cx="1087.2" cy="917.0" r="0.4" fill="#f0a010" opacity="0.8"/>
<circle cx="1026.4" cy="925.5" r="0.6" fill="#f0a010" opacity="0.8"/>
<circle cx="1049.1" cy="931.8" r="0.7" fill="#f0a010" opacity="0.8"/>
<circle cx="1111.2" cy="911.1" r="0.8" fill="#f0a010" opacity="0.8"/>
<circle cx="1040.5" cy="917.4" r="1.0" fill="#f0a010" opacity="0.8"/>
<circle cx="1078.9" cy="921.7" r="0.9" fill="#f0a010" opacity="0.8"/>
<circle cx="1031.6" cy="922.3" r="0.8" fill="#f0a010" opacity="0.8"/>
<circle cx="1056.0" cy="893.2" r="1.0" fill="#f0a010" opacity="0.8"/>
<circle cx="1073.7" cy="920.8" r="1.0" fill="#f0a010" opacity="0.8"/>
<circle cx="1098.6" cy="928.8" r="0.7" fill="#f0a010" opacity="0.8"/>
<circle cx="1107.5" cy="909.8" r="1.1" fill="#f0a010" opacity="0.8"/>
<circle cx="1115.5" cy="895.9" r="0.5" fill="#f0a010" opacity="0.8"/>
<circle cx="1047.3" cy="930.6" r="0.7" fill="#f0a010" opacity="0.8"/>
<circle cx="1089.5" cy="904.0" r="0.8" fill="#f0a010" opacity="0.8"/>
<circle cx="1064.7" cy="906.0" r="0.8" fill="#f0a010" opacity="0.8"/>
<circle cx="1085.2" cy="928.2" r="0.9" fill="#f0a010" opacity="0.8"/>
<circle cx="1120.7" cy="926.3" r="1.1" fill="#f0a010" opacity="0.8"/>
<circle cx="1094.1" cy="898.5" r="1.0" fill="#f0a010" opacity="0.8"/>
<circle cx="1124.4" cy="928.2" r="0.8" fill="#f0a010" opacity="0.8"/>
<circle cx="1098.5" cy="900.4" r="1.0" fill="#f0a010" opacity="0.8"/>
<circle cx="1084.1" cy="903.4" r="0.4" fill="#f0a010" opacity="0.8"/>
<circle cx="1113.0" cy="931.6" r="0.5" fill="#f0a010" opacity="0.8"/>
<circle cx="1107.5" cy="908.4" r="0.5" fill="#f0a010" opacity="0.8"/>
<circle cx="1055.3" cy="922.8" r="1.0" fill="#f0a010" opacity="0.8"/>
<circle cx="1029.6" cy="916.6" r="0.4" fill="#f0a010" opacity="0.8"/>
<circle cx="1099.0" cy="905.2" r="1.0" fill="#f0a010" opacity="0.8"/>
<circle cx="1126.0" cy="912.2" r="1.1" fill="#f0a010" opacity="0.8"/>
<circle cx="1056.9" cy="895.1" r="0.8" fill="#f0a010" opacity="0.8"/>
<circle cx="1028.2" cy="899.9" r="0.7" fill="#f0a010" opacity="0.8"/>
<circle cx="1087.9" cy="898.2" r="0.4" fill="#f0a010" opacity="0.8"/>
<circle cx="1114.4" cy="904.6" r="1.1" fill="#f0a010" opacity="0.8"/>
<circle cx="1117.4" cy="907.1" r="0.7" fill="#f0a010" opacity="0.8"/>
<circle cx="1078.6" cy="917.8" r="0.8" fill="#f0a010" opacity="0.8"/>
<circle cx="1082.6" cy="916.8" r="1.1" fill="#f0a010" opacity="0.8"/>
<circle cx="1077.2" cy="909.2" r="0.9" fill="#f0a010" opacity="0.8"/>
<circle cx="1049.5" cy="904.0" r="1.1" fill="#f0a010" opacity="0.8"/>
<circle cx="1078.7" cy="913.9" r="0.4" fill="#f0a010" opacity="0.8"/>
<circle cx="1067.8" cy="915.2" r="0.4" fill="#f0a010" opacity="0.8"/>
<circle cx="1088.4" cy="917.3" r="0.4" fill="#f0a010" opacity="0.8"/>
<circle cx="1089.6" cy="910.7" r="0.9" fill="#f0a010" opacity="0.8"/>
<circle cx="1061.3" cy="920.3" r="0.9" fill="#f0a010" opacity="0.8"/>
<circle cx="1027.3" cy="894.4" r="0.9" fill="#f0a010" opacity="0.8"/>
<circle cx="1124.2" cy="902.0" r="0.7" fill="#f0a010" opacity="0.8"/>
<circle cx="1086.0" cy="904.8" r="0.7" fill="#f0a010" opacity="0.8"/>
<circle cx="1057.2" cy="906.8" r="0.8" fill="#f0a010" opacity="0.8"/>
<circle cx="1055.9" cy="907.1" r="0.9" fill="#f0a010" opacity="0.8"/>
<circle cx="1027.8" cy="914.8" r="0.9" fill="#f0a010" opacity="0.8"/>
<circle cx="1056.9" cy="900.9" r="1.0" fill="#f0a010" opacity="0.8"/>
<circle cx="1049.6" cy="899.5" r="0.7" fill="#f0a010" opacity="0.8"/>
<circle cx="1096.9" cy="896.1" r="0.6" fill="#f0a010" opacity="0.8"/>
<circle cx="1059.4" cy="925.3" r="0.7" fill="#f0a010" opacity="0.8"/>
<circle cx="1113.1" cy="898.8" r="0.6" fill="#f0a010" opacity="0.8"/>
<circle cx="1092.0" cy="927.4" r="0.7" fill="#f0a010" opacity="0.8"/>
<circle cx="1048.2" cy="896.8" r="0.8" fill="#f0a010" opacity="0.8"/>
<circle cx="1044.7" cy="924.3" r="1.0" fill="#f0a010" opacity="0.8"/>
<circle cx="1043.9" cy="903.1" r="1.0" fill="#f0a010" opacity="0.8"/>
<circle cx="1091.1" cy="924.3" r="0.6" fill="#f0a010" opacity="0.8"/>
<circle cx="1038.4" cy="903.7" r="1.0" fill="#f0a010" opacity="0.8"/>
<circle cx="1052.9" cy="905.9" r="0.7" fill="#f0a010" opacity="0.8"/>
<circle cx="1068.2" cy="908.4" r="1.0" fill="#f0a010" opacity="0.8"/>
<circle cx="1041.1" cy="892.2" r="1.1" fill="#f0a010" opacity="0.8"/>
<circle cx="1115.6" cy="931.5" r="0.7" fill="#f0a010" opacity="0.8"/>
<circle cx="1122.9" cy="929.1" r="0.6" fill="#f0a010" opacity="0.8"/>
<circle cx="1101.8" cy="925.5" r="0.9" fill="#f0a010" opacity="0.8"/>
<circle cx="1078.5" cy="903.6" r="0.6" fill="#f0a010" opacity="0.8"/>
<circle cx="1048.4" cy="894.7" r="0.8" fill="#f0a010" opacity="0.8"/>
<circle cx="1054.6" cy="924.4" r="0.4" fill="#f0a010" opacity="0.8"/>
<circle cx="1118.1" cy="919.7" r="1.0" fill="#f0a010" opacity="0.8"/>
<circle cx="1117.3" cy="928.0" r="0.8" fill="#f0a010" opacity="0.8"/>
<path d="M931.5,931 Q942,938 944,946 L950.6,951.6" stroke="#ff6010" stroke-width="2.5" fill="none"/>
<path d="M965,990 Q990,972 1041,970.7" stroke="#ff4a10" stroke-width="1.6" fill="none" stroke-dasharray="3 2"/>
<path d="M1084,970.7 L1100.8,969.5" stroke="#ff5a10" stroke-width="2" fill="none"/>
</svg></div>
<!-- curves -->
<svg style="left:0;top:0" width="2048" height="1112">
<path d="M1254,872.5 C1400,873 1460,872 1520,871.5" stroke="#8677d2" stroke-width="1.6" fill="none"/>
<path d="M1254,872.5 C1500,872 1520,1039 1752,1039" stroke="#8677d2" stroke-width="1.6" fill="none"/>
<path d="M1920,1039 C1975,1039 2000,1000 2048,915" stroke="#8677d2" stroke-width="1.6" fill="none"/>
<!-- dotted: color -> particlesGpu -->
<path d="M1057,522 L1060,690 L1063,803" stroke="#7d8ca0" stroke-width="1.2" stroke-dasharray="1.5 2.5" fill="none"/>
<path d="M1054,687 L1066,687 L1060,697Z" fill="#7a8aa2"/>
<path d="M1067,1011 L1068,1041" stroke="#7d8ca0" stroke-width="1.2" stroke-dasharray="1.5 2.5" fill="none"/>
<!-- dotted: left -> particlesGpu -->
<path d="M0,955 L556,938.5 L912,929.5" stroke="#8090a4" stroke-width="1.2" stroke-dasharray="1.5 2.5" fill="none"/>
<path d="M26,950 L36,955 L26,960Z" fill="#6f7f96"/>
<path d="M909,1005 L880,1030" stroke="#556" stroke-width="1" stroke-dasharray="1.5 2.5" fill="none"/>
</svg>
<!-- bottom right ramp node -->
<div class="a" style="left:1752px;top:989px;width:35px;height:52px;background:#5a5080;border:1px solid #8f80dc;border-right:2px solid #8f80dc;border-bottom:none"></div>
<div class="a" style="left:1763px;top:989px;width:1px;height:52px;background:#8f80dc"></div>
<div class="a" style="left:1764px;top:1013px;width:23px;height:1px;background:#8f80dc"></div>
<div class="a" style="left:1753px;top:1035px;width:10px;height:6px;background:#9486e0"></div>
<svg style="left:1763px;top:989px" width="24" height="52"><circle cx="12" cy="12.5" r="5.6" fill="none" stroke="#b9afd2" stroke-width="2"/><circle cx="12" cy="12.5" r="2.2" fill="#b9afd2"/><path d="M3.8 44.8L10.2 33.2L12.4 35.5L17.8 30.5L18.6 32L12.4 42.5L9.9 40L5 45.5Z" fill="#b9afd2"/></svg>
<div class="a" style="left:1787px;top:989px;width:133px;height:52px;background:#6e6e6e;border-top:1px solid #a8a8a8"></div>
<div class="a" style="left:1792px;top:994px;width:114px;height:47px;background:#1a1a1a"></div>
<div class="a" style="left:1804px;top:994px;width:88px;height:47px;background:linear-gradient(180deg,#ffffff,#c8c8c8 25%,#707070 55%,#202020 85%,#000)"></div>
<div class="a" style="left:1909px;top:990px;width:11px;height:51px;background:#9a9a9a"></div>
<div class="a" style="left:1910px;top:1022px;width:9px;height:13px;background:#5e5288"></div>
<div class="a" style="left:1910px;top:1038px;width:9px;height:3px;background:#9486e0"></div>

<div class="a" style="left:1520px;top:105px;width:527px;height:800px;background:#404040"></div>
<div class="a" style="left:1520px;top:105px;width:527px;height:47px;background:#262626"></div>
<div class="a" style="left:1589px;top:108px;width:454px;height:20px;background:#2e2e2e"></div>
<div class="t" style="left:1524px;top:112.8px;font-size:13px;color:#ececec;font-weight:bold;">Container</div>
<div class="t mono" style="left:1592px;top:112.8px;font-size:13px;color:#e6e6e6;">particlesGpu</div>
<div class="t" style="left:1524px;top:131px;font-size:17px;font-weight:bold;color:#d8d8d8">?</div>
<div class="a" style="left:1543px;top:131px;width:18px;height:18px;background:linear-gradient(180deg,#3a6ea8 50%,#f5c842 50%)"></div>
<div class="t" style="left:1546px;top:131px;font-size:17px;font-weight:bold;color:#f0f0f0;text-shadow:0 0 1px #000">?</div>
<div class="a" style="left:1572px;top:133px;width:4px;height:3px;background:#e8e8e8"></div><div class="a" style="left:1572px;top:138px;width:4px;height:9px;background:#e8e8e8"></div>
<svg style="left:1910px;top:128px" width="135" height="24"><path d="M7 18L9 13L17 5L20 8L12 16Z" fill="#9a9a9a"/><path d="M6.5 19L8 15L10.5 17.5Z" fill="#9a9a9a"/><ellipse cx="35" cy="11.5" rx="8.5" ry="5" fill="#9a9a9a"/><path d="M29 14L26 19L33 16Z" fill="#9a9a9a"/><path d="M49 17L52 7L63 9L60 19Z" fill="none" stroke="#e8e8e8" stroke-width="1.8"/><path d="M56 5H62V9H55Z" fill="#e8e8e8"/><rect x="70.5" y="3.5" width="17" height="17" rx="6" fill="#f4f4f4"/><path d="M78.5 6H81Q82.5 6 82.5 7.5V11.5Q82.5 12.5 81.5 12.5H77Q76 12.5 76 14V15H74.5Q73 15 73 13.5V11Q73 9.5 74.5 9.5H78.5V8.8H76.5V7.5Q76.5 6 78.5 6Z" fill="#3d77b0"/><path d="M80 18H77.5Q76 18 76 16.5V14.5Q76 13.5 77 13.5H81.5Q83 13.5 83 12V11H84Q85.5 11 85.5 12.5V14Q85.5 15.5 84 15.5H80V16H82V16.5Q82 18 80 18Z" fill="#f2c53d"/><path d="M101 5.5V18.5M94.5 12H107.5" stroke="#ececec" stroke-width="3"/><circle cx="123" cy="12" r="8.5" fill="none" stroke="#e8e8e8" stroke-width="1.8"/><circle cx="123" cy="12" r="5" fill="none" stroke="#e8e8e8" stroke-width="1.8"/><circle cx="123" cy="12" r="2" fill="#e8e8e8"/></svg>
<div class="t" style="left:1530px;top:164.8px;font-size:13px;color:#cacaca;">Layout</div>
<div class="t" style="left:1582px;top:164.8px;font-size:13px;color:#cacaca;">Panel</div>
<div class="t" style="left:1627px;top:164.8px;font-size:13px;color:#cacaca;">Look</div>
<div class="t" style="left:1667px;top:164.8px;font-size:13px;color:#cacaca;">Children</div>
<div class="t" style="left:1728px;top:164.8px;font-size:13px;color:#cacaca;">Drag/Drop</div>
<div class="t" style="left:1804px;top:164.8px;font-size:13px;color:#cacaca;">Extensions</div>
<div class="t" style="left:1880px;top:164.8px;font-size:13px;color:#cacaca;">Common</div>
<div class="a" style="left:1524px;top:183px;width:519px;height:1px;background:#7a7a7a"></div>
<div class="t" style="left:1530px;top:192.9px;font-size:12.5px;color:#cacaca;">ParticlesGPU</div>
<div class="t" style="left:1617px;top:192.8px;font-size:13px;color:#cacaca;">Forces</div>
<div class="t" style="left:1668px;top:192.8px;font-size:13px;color:#cacaca;">Render</div>
<div class="t" style="left:1722px;top:192.8px;font-size:13px;color:#cacaca;">Material</div>
<div class="t" style="left:1782px;top:192.8px;font-size:13px;color:#cacaca;">Particle Source</div>
<div class="t" style="left:1884px;top:192.8px;font-size:13px;color:#cacaca;">About</div>
<div class="a" style="left:1524px;top:210px;width:519px;height:1px;background:#7a7a7a"></div>
<div class="a" style="left:1524px;top:208px;width:88px;height:3px;background:#dcdcdc"></div>
<div class="t" style="right:312px;top:220.6px;font-size:13px;color:#c9c9c9;">Create</div>
<div class="a" style="left:1741px;top:218px;width:302px;height:18px;background:#5a5a5a"></div>
<div class="t" style="left:1746px;top:220.6px;font-size:13px;color:#d2d2d2;">By Particles per Frame</div>
<svg style="left:2029px;top:224px" width="11" height="6"><path d="M0 0H10.5L5.25 5.5Z" fill="#e0e0e0"/></svg>
<svg style="left:1741px;top:230px" width="7" height="6"><path d="M0 0V6H6.5Z" fill="#b9a6ff"/></svg>
<div class="t" style="right:312px;top:242.6px;font-size:13px;color:#6a6a6a;">Particles</div>
<div class="t" style="left:1744px;top:242.6px;font-size:13px;color:#6a6a6a;">4000</div>
<svg style="left:1741px;top:253px" width="7" height="6"><path d="M0 0V6H6.5Z" fill="#b9a6ff"/></svg>
<div class="a" style="left:1793px;top:248px;width:250px;height:2px;background:#3a3a3a"></div>
<div class="a" style="left:1841px;top:241px;width:9px;height:16px;background:#4a4a4a;border:1px solid #555"></div>
<div class="t" style="right:312px;top:264.6px;font-size:13px;color:#c9c9c9;">Birth</div>
<div class="a" style="left:1741px;top:261px;width:49px;height:20px;background:#555555"></div>
<div class="t" style="left:1744px;top:264.6px;font-size:13px;color:#d2d2d2;">5000</div>
<svg style="left:1741px;top:275px" width="7" height="6"><path d="M0 0V6H6.5Z" fill="#b9a6ff"/></svg>
<div class="a" style="left:1793px;top:270px;width:250px;height:2px;background:#2a2a2a"></div>
<div class="a" style="left:1913px;top:263px;width:9px;height:16px;background:#606060;"></div>
<div class="t" style="right:312px;top:286.6px;font-size:13px;color:#c9c9c9;">Life Type</div>
<div class="a" style="left:1741px;top:284px;width:302px;height:18px;background:#5a5a5a"></div>
<div class="t" style="left:1746px;top:286.6px;font-size:13px;color:#d2d2d2;">Constant</div>
<svg style="left:2029px;top:290px" width="11" height="6"><path d="M0 0H10.5L5.25 5.5Z" fill="#e0e0e0"/></svg>
<svg style="left:1741px;top:296px" width="7" height="6"><path d="M0 0V6H6.5Z" fill="#b9a6ff"/></svg>
<div class="t" style="right:312px;top:308.6px;font-size:13px;color:#c9c9c9;">Life Min</div>
<div class="a" style="left:1741px;top:305px;width:49px;height:20px;background:#555555"></div>
<div class="t" style="left:1744px;top:308.6px;font-size:13px;color:#d2d2d2;">15</div>
<div class="a" style="left:1793px;top:314px;width:250px;height:2px;background:#2a2a2a"></div>
<div class="a" style="left:1829px;top:307px;width:9px;height:16px;background:#606060;"></div>
<div class="t" style="right:312px;top:330.6px;font-size:13px;color:#6a6a6a;">Life Max</div>
<div class="t" style="left:1744px;top:330.6px;font-size:13px;color:#6a6a6a;">30</div>
<div class="a" style="left:1793px;top:336px;width:250px;height:2px;background:#3a3a3a"></div>
<div class="a" style="left:1865px;top:329px;width:9px;height:16px;background:#4a4a4a;border:1px solid #555"></div>
<div class="t" style="right:312px;top:352.6px;font-size:13px;color:#c9c9c9;">Lifevariance</div>
<div class="a" style="left:1741px;top:349px;width:49px;height:20px;background:#555555"></div>
<div class="t" style="left:1744px;top:352.6px;font-size:13px;color:#d2d2d2;">5</div>
<div class="a" style="left:1793px;top:358px;width:250px;height:2px;background:#2a2a2a"></div>
<div class="a" style="left:1853px;top:351px;width:9px;height:16px;background:#606060;"></div>
<div class="t" style="right:312px;top:374.6px;font-size:13px;color:#c9c9c9;">Life Modifier</div>
<div class="a" style="left:1741px;top:372px;width:302px;height:18px;background:#5a5a5a"></div>
<div class="t" style="left:1746px;top:374.6px;font-size:13px;color:#d2d2d2;">None</div>
<svg style="left:2029px;top:378px" width="11" height="6"><path d="M0 0H10.5L5.25 5.5Z" fill="#e0e0e0"/></svg>
<svg style="left:1741px;top:384px" width="7" height="6"><path d="M0 0V6H6.5Z" fill="#b9a6ff"/></svg>
<div class="a" style="left:1524px;top:398px;width:519px;height:1px;background:#4e4e4e"></div>
<div class="t" style="right:312px;top:408.6px;font-size:13px;color:#c9c9c9;">Size Type</div>
<div class="a" style="left:1741px;top:406px;width:302px;height:18px;background:#5a5a5a"></div>
<div class="t" style="left:1746px;top:408.6px;font-size:13px;color:#d2d2d2;">Velocity</div>
<svg style="left:2029px;top:412px" width="11" height="6"><path d="M0 0H10.5L5.25 5.5Z" fill="#e0e0e0"/></svg>
<svg style="left:1741px;top:418px" width="7" height="6"><path d="M0 0V6H6.5Z" fill="#b9a6ff"/></svg>
<div class="t" style="right:312px;top:430.6px;font-size:13px;color:#6a6a6a;">Particle Size Min</div>
<div class="t mono" style="left:1744px;top:430.6px;font-size:13px;color:#6a6a6a;">0.5</div>
<svg style="left:1741px;top:441px" width="7" height="6"><path d="M0 0V6H6.5Z" fill="#b9a6ff"/></svg>
<div class="a" style="left:1793px;top:436px;width:250px;height:2px;background:#3a3a3a"></div>
<div class="a" style="left:1817px;top:429px;width:9px;height:16px;background:#4a4a4a;border:1px solid #555"></div>
<div class="t" style="right:312px;top:452.6px;font-size:13px;color:#6a6a6a;">Particle Size Max</div>
<div class="t" style="left:1744px;top:452.6px;font-size:13px;color:#6a6a6a;">2</div>
<svg style="left:1741px;top:463px" width="7" height="6"><path d="M0 0V6H6.5Z" fill="#b9a6ff"/></svg>
<div class="a" style="left:1793px;top:458px;width:250px;height:2px;background:#3a3a3a"></div>
<div class="a" style="left:1889px;top:451px;width:9px;height:16px;background:#4a4a4a;border:1px solid #555"></div>
<div class="t" style="right:312px;top:474.6px;font-size:13px;color:#c9c9c9;">Size Lookup (CHOP)</div>
<div class="a" style="left:1741px;top:472px;width:282px;height:20px;background:#bdbdbd"></div>
<div class="t mono" style="left:1744px;top:474.8px;font-size:13px;color:#1a1a1a;">scale_spectrum</div>
<svg style="left:2024px;top:472px" width="20" height="20"><path d="M1 2L5 1L11 8L9 10L18 17L7 16L9 13Z" fill="none" stroke="#111" stroke-width="1.3"/></svg>
<div class="a" style="left:1524px;top:498px;width:519px;height:1px;background:#4e4e4e"></div>
<div class="t" style="right:312px;top:508.6px;font-size:13px;color:#c9c9c9;">Pos Limit Plane</div>
<div class="a" style="left:1741px;top:505px;width:99px;height:20px;background:#555555"></div>
<div class="t" style="left:1744px;top:508.6px;font-size:13px;color:#d2d2d2;">8</div>
<svg style="left:1741px;top:519px" width="7" height="6"><path d="M0 0V6H6.5Z" fill="#b9a6ff"/></svg>
<div class="a" style="left:1842px;top:505px;width:99px;height:20px;background:#555555"></div>
<div class="t" style="left:1845px;top:508.6px;font-size:13px;color:#d2d2d2;">8</div>
<svg style="left:1842px;top:519px" width="7" height="6"><path d="M0 0V6H6.5Z" fill="#b9a6ff"/></svg>
<div class="a" style="left:1943px;top:505px;width:100px;height:20px;background:#555555"></div>
<div class="t" style="left:1946px;top:508.6px;font-size:13px;color:#d2d2d2;">8</div>
<svg style="left:1943px;top:519px" width="7" height="6"><path d="M0 0V6H6.5Z" fill="#b9a6ff"/></svg>
<div class="t" style="right:312px;top:530.6px;font-size:13px;color:#c9c9c9;">Neg Limit Plane</div>
<div class="a" style="left:1741px;top:527px;width:99px;height:20px;background:#555555"></div>
<div class="t" style="left:1744px;top:530.6px;font-size:13px;color:#d2d2d2;">-8</div>
<svg style="left:1741px;top:541px" width="7" height="6"><path d="M0 0V6H6.5Z" fill="#b9a6ff"/></svg>
<div class="a" style="left:1842px;top:527px;width:99px;height:20px;background:#555555"></div>
<div class="t" style="left:1845px;top:530.6px;font-size:13px;color:#d2d2d2;">-8</div>
<svg style="left:1842px;top:541px" width="7" height="6"><path d="M0 0V6H6.5Z" fill="#b9a6ff"/></svg>
<div class="a" style="left:1943px;top:527px;width:100px;height:20px;background:#555555"></div>
<div class="t" style="left:1946px;top:530.6px;font-size:13px;color:#d2d2d2;">-8</div>
<svg style="left:1943px;top:541px" width="7" height="6"><path d="M0 0V6H6.5Z" fill="#b9a6ff"/></svg>
<div class="t" style="right:312px;top:552.6px;font-size:13px;color:#c9c9c9;">Hit Behaviour</div>
<div class="a" style="left:1741px;top:550px;width:302px;height:18px;background:#5a5a5a"></div>
<div class="t" style="left:1746px;top:552.6px;font-size:13px;color:#d2d2d2;">Die on Contact</div>
<svg style="left:2029px;top:556px" width="11" height="6"><path d="M0 0H10.5L5.25 5.5Z" fill="#e0e0e0"/></svg>
<svg style="left:1741px;top:562px" width="7" height="6"><path d="M0 0V6H6.5Z" fill="#b9a6ff"/></svg>
<div class="t" style="right:312px;top:574.6px;font-size:13px;color:#6a6a6a;">Avoid Factor</div>
<div class="t" style="left:1744px;top:574.6px;font-size:13px;color:#6a6a6a;">1</div>
<svg style="left:1741px;top:585px" width="7" height="6"><path d="M0 0V6H6.5Z" fill="#b9a6ff"/></svg>
<div class="a" style="left:1793px;top:580px;width:250px;height:2px;background:#3a3a3a"></div>
<div class="a" style="left:1913px;top:573px;width:9px;height:16px;background:#4a4a4a;border:1px solid #555"></div>
<div class="t" style="right:312px;top:596.6px;font-size:13px;color:#c9c9c9;">Display Bounds</div>
<div class="a" style="left:1741px;top:594.0px;width:49px;height:19px;background:#2c2c2c"></div>
<div class="a" style="left:1766px;top:595.0px;width:23px;height:17px;background:#55545c"></div>
<div class="t" style="left:1745px;top:597.1px;font-size:13px;color:#d2d2d2;">Off</div>
<svg style="left:1741px;top:607.0px" width="7" height="6"><path d="M0 0V6H6.5Z" fill="#b9a6ff"/></svg>
<div class="a" style="left:1524px;top:620px;width:519px;height:1px;background:#4e4e4e"></div>
<div class="t" style="right:312px;top:630.6px;font-size:13px;color:#6a6a6a;">Mass</div>
<div class="t" style="left:1744px;top:630.6px;font-size:13px;color:#6a6a6a;">1</div>
<div class="a" style="left:1793px;top:636px;width:250px;height:2px;background:#3a3a3a"></div>
<div class="a" style="left:1841px;top:629px;width:9px;height:16px;background:#4a4a4a;border:1px solid #555"></div>
<div class="t" style="right:312px;top:652.6px;font-size:13px;color:#c9c9c9;">Drag</div>
<div class="a" style="left:1741px;top:649px;width:49px;height:20px;background:#555555"></div>
<div class="t" style="left:1744px;top:652.6px;font-size:13px;color:#d2d2d2;">1</div>
<svg style="left:1741px;top:663px" width="7" height="6"><path d="M0 0V6H6.5Z" fill="#b9a6ff"/></svg>
<div class="a" style="left:1793px;top:658px;width:250px;height:2px;background:#2a2a2a"></div>
<div class="a" style="left:1842px;top:651px;width:9px;height:16px;background:#606060;"></div>
<div class="a" style="left:1524px;top:675px;width:519px;height:1px;background:#4e4e4e"></div>
<div class="t" style="right:312px;top:685.6px;font-size:13px;color:#c9c9c9;">Max Velocity</div>
<div class="a" style="left:1741px;top:682px;width:49px;height:20px;background:#555555"></div>
<div class="t" style="left:1744px;top:685.6px;font-size:13px;color:#d2d2d2;">1000</div>
<svg style="left:1741px;top:696px" width="7" height="6"><path d="M0 0V6H6.5Z" fill="#b9a6ff"/></svg>
<div class="a" style="left:1793px;top:691px;width:250px;height:2px;background:#2a2a2a"></div>
<div class="a" style="left:2034px;top:684px;width:9px;height:16px;background:#606060;"></div>
<div class="t" style="right:312px;top:707.6px;font-size:13px;color:#c9c9c9;">System Max Velocity</div>
<div class="t mono" style="left:1744px;top:707.6px;font-size:13px;color:#6a6a6a;">2.0775</div>
<div class="t mono" style="left:1744px;top:707.6px;font-size:13px;color:#d8cc50;">2.0775</div>
<div class="a" style="left:1793px;top:713px;width:250px;height:2px;background:#3a3a3a"></div>
<div class="a" style="left:1794px;top:706px;width:9px;height:16px;background:#4a4a4a;border:1px solid #555"></div>
<div class="t" style="right:312px;top:729.6px;font-size:13px;color:#c9c9c9;">Velocity Remap</div>
<div class="a" style="left:1741px;top:726px;width:150px;height:20px;background:#555555"></div>
<div class="t" style="left:1744px;top:729.6px;font-size:13px;color:#d2d2d2;">0</div>
<svg style="left:1741px;top:740px" width="7" height="6"><path d="M0 0V6H6.5Z" fill="#b9a6ff"/></svg>
<div class="a" style="left:1893px;top:726px;width:150px;height:20px;background:#555555"></div>
<div class="t" style="left:1896px;top:729.6px;font-size:13px;color:#d2d2d2;">2</div>
<svg style="left:1893px;top:740px" width="7" height="6"><path d="M0 0V6H6.5Z" fill="#b9a6ff"/></svg>
<div class="a" style="left:1524px;top:753px;width:519px;height:1px;background:#4e4e4e"></div>
<div class="t" style="right:312px;top:762.6px;font-size:13px;color:#c9c9c9;">Speed</div>
<div class="a" style="left:1741px;top:759px;width:49px;height:20px;background:#2c2c2c"></div>
<div class="t mono" style="left:1744px;top:762.6px;font-size:13px;color:#8fd8d8;">4.1634</div>
<svg style="left:1741px;top:773px" width="7" height="6"><path d="M0 0V6H6.5Z" fill="#b9a6ff"/></svg>
<div class="a" style="left:1793px;top:768px;width:250px;height:2px;background:#2a2a2a"></div>
<div class="a" style="left:2034px;top:761px;width:9px;height:16px;background:#86c8c8;"></div>
<div class="t" style="right:312px;top:784.6px;font-size:13px;color:#c9c9c9;letter-spacing:0.18px;">Max Particles in Simulation</div>
<div class="a" style="left:1741px;top:781px;width:49px;height:20px;background:#555555"></div>
<div class="t" style="left:1744px;top:784.6px;font-size:13px;color:#d2d2d2;">409600</div>
<div class="a" style="left:1793px;top:790px;width:250px;height:2px;background:#2a2a2a"></div>
<div class="a" style="left:1854px;top:783px;width:9px;height:16px;background:#606060;"></div>
<div class="t" style="right:312px;top:806.6px;font-size:13px;color:#c9c9c9;">Pause</div>
<div class="a" style="left:1741px;top:804.5px;width:49px;height:19px;background:#2c2c2c"></div>
<div class="a" style="left:1766px;top:805.5px;width:23px;height:17px;background:#55545c"></div>
<div class="t" style="left:1745px;top:807.6px;font-size:13px;color:#d2d2d2;">Off</div>
<div class="t" style="right:312px;top:829.6px;font-size:13px;color:#c9c9c9;">Reset</div>
<div class="a" style="left:1741px;top:827.0px;width:49px;height:19px;background:#2c2c2c"></div>
<div class="t" style="left:1745px;top:830.1px;font-size:13px;color:#d2d2d2;">Off</div>
<svg style="left:1741px;top:840.0px" width="7" height="6"><path d="M0 0V6H6.5Z" fill="#b9a6ff"/></svg>
<div class="a" style="left:0;top:1041px;width:2048px;height:71px;background:#2d2e33;border-top:1px solid #5a5b60;border-left:1px solid #222;border-right:1px solid #222"></div>
<div class="a" style="left:1px;top:1042px;width:280px;height:69px;background:#0c0b17;border-right:1px solid #55565c"></div>
<div class="t" style="left:7px;top:1047.3px;font-size:13px;color:#878b95;">Start:</div>
<div class="t" style="left:68px;top:1047.3px;font-size:13px;color:#7b9ee6;">1</div>
<div class="t" style="left:138px;top:1047.3px;font-size:13px;color:#878b95;">End:</div>
<div class="t" style="left:198px;top:1047.3px;font-size:13px;color:#7b9ee6;">4500</div>
<div class="t" style="left:7px;top:1062.7px;font-size:13px;color:#878b95;">RStart:</div>
<div class="t" style="left:68px;top:1062.7px;font-size:13px;color:#7b9ee6;">1</div>
<div class="t" style="left:138px;top:1062.7px;font-size:13px;color:#878b95;">REnd:</div>
<div class="t" style="left:198px;top:1062.7px;font-size:13px;color:#7b9ee6;">4500</div>
<div class="t" style="left:7px;top:1078.0px;font-size:13px;color:#878b95;">FPS:</div>
<div class="t" style="left:68px;top:1078.0px;font-size:13px;color:#7b9ee6;">60.0</div>
<div class="t" style="left:138px;top:1078.0px;font-size:13px;color:#878b95;">Tempo:</div>
<div class="t" style="left:198px;top:1078.0px;font-size:13px;color:#7b9ee6;">120.0</div>
<div class="t" style="left:7px;top:1093.4px;font-size:13px;color:#878b95;">ResetF:</div>
<div class="t" style="left:68px;top:1093.4px;font-size:13px;color:#7b9ee6;">1</div>
<div class="t" style="left:138px;top:1093.4px;font-size:13px;color:#878b95;">T Sig:</div>
<div class="t" style="left:198px;top:1093.4px;font-size:13px;color:#7b9ee6;">4</div>
<div class="t" style="left:233.5px;top:1093.4px;font-size:13px;color:#7b9ee6;">4</div>
<div class="a" style="left:281px;top:1042px;width:1763px;height:14px;background:#0e0e0e;border-bottom:1px solid #4a4b50"></div>
<div class="a" style="left:280.5px;top:1042px;width:1px;height:14px;background:#5a5a5a"></div>
<div class="t" style="left:282.5px;top:1042.8px;font-size:11px;color:#b4b4b4;">1</div>
<div class="a" style="left:359.0px;top:1042px;width:1px;height:14px;background:#5a5a5a"></div>
<div class="t" style="left:360.97px;top:1042.8px;font-size:11px;color:#b4b4b4;">201</div>
<div class="a" style="left:437.4px;top:1042px;width:1px;height:14px;background:#5a5a5a"></div>
<div class="t" style="left:439.44px;top:1042.8px;font-size:11px;color:#b4b4b4;">401</div>
<div class="a" style="left:515.9px;top:1042px;width:1px;height:14px;background:#5a5a5a"></div>
<div class="t" style="left:517.91px;top:1042.8px;font-size:11px;color:#b4b4b4;">601</div>
<div class="a" style="left:594.4px;top:1042px;width:1px;height:14px;background:#5a5a5a"></div>
<div class="t" style="left:596.38px;top:1042.8px;font-size:11px;color:#b4b4b4;">801</div>
<div class="a" style="left:672.9px;top:1042px;width:1px;height:14px;background:#5a5a5a"></div>
<div class="t" style="left:674.85px;top:1042.8px;font-size:11px;color:#b4b4b4;">1001</div>
<div class="a" style="left:751.3px;top:1042px;width:1px;height:14px;background:#5a5a5a"></div>
<div class="t" style="left:753.3199999999999px;top:1042.8px;font-size:11px;color:#b4b4b4;">1201</div>
<div class="a" style="left:829.8px;top:1042px;width:1px;height:14px;background:#5a5a5a"></div>
<div class="t" style="left:831.79px;top:1042.8px;font-size:11px;color:#b4b4b4;">1401</div>
<div class="a" style="left:908.3px;top:1042px;width:1px;height:14px;background:#5a5a5a"></div>
<div class="t" style="left:910.26px;top:1042.8px;font-size:11px;color:#b4b4b4;">1601</div>
<div class="a" style="left:986.7px;top:1042px;width:1px;height:14px;background:#5a5a5a"></div>
<div class="t" style="left:988.73px;top:1042.8px;font-size:11px;color:#b4b4b4;">1801</div>
<div class="a" style="left:1065.2px;top:1042px;width:1px;height:14px;background:#5a5a5a"></div>
<div class="t" style="left:1067.2px;top:1042.8px;font-size:11px;color:#b4b4b4;">2001</div>
<div class="a" style="left:1143.7px;top:1042px;width:1px;height:14px;background:#5a5a5a"></div>
<div class="t" style="left:1145.67px;top:1042.8px;font-size:11px;color:#b4b4b4;">2201</div>
<div class="a" style="left:1222.1px;top:1042px;width:1px;height:14px;background:#5a5a5a"></div>
<div class="t" style="left:1224.1399999999999px;top:1042.8px;font-size:11px;color:#b4b4b4;">2401</div>
<div class="a" style="left:1300.6px;top:1042px;width:1px;height:14px;background:#5a5a5a"></div>
<div class="t" style="left:1302.6100000000001px;top:1042.8px;font-size:11px;color:#b4b4b4;">2601</div>
<div class="a" style="left:1379.1px;top:1042px;width:1px;height:14px;background:#5a5a5a"></div>
<div class="t" style="left:1381.08px;top:1042.8px;font-size:11px;color:#b4b4b4;">2801</div>
<div class="a" style="left:1457.5px;top:1042px;width:1px;height:14px;background:#5a5a5a"></div>
<div class="t" style="left:1459.55px;top:1042.8px;font-size:11px;color:#b4b4b4;">3001</div>
<div class="a" style="left:1536.0px;top:1042px;width:1px;height:14px;background:#5a5a5a"></div>
<div class="t" style="left:1538.02px;top:1042.8px;font-size:11px;color:#b4b4b4;">3201</div>
<div class="a" style="left:1614.5px;top:1042px;width:1px;height:14px;background:#5a5a5a"></div>
<div class="t" style="left:1616.49px;top:1042.8px;font-size:11px;color:#b4b4b4;">3401</div>
<div class="a" style="left:1693.0px;top:1042px;width:1px;height:14px;background:#5a5a5a"></div>
<div class="t" style="left:1694.96px;top:1042.8px;font-size:11px;color:#b4b4b4;">3601</div>
<div class="a" style="left:1771.4px;top:1042px;width:1px;height:14px;background:#5a5a5a"></div>
<div class="t" style="left:1773.43px;top:1042.8px;font-size:11px;color:#b4b4b4;">3801</div>
<div class="a" style="left:1849.9px;top:1042px;width:1px;height:14px;background:#5a5a5a"></div>
<div class="t" style="left:1851.9px;top:1042.8px;font-size:11px;color:#b4b4b4;">4001</div>
<div class="a" style="left:1928.4px;top:1042px;width:1px;height:14px;background:#5a5a5a"></div>
<div class="t" style="left:1930.37px;top:1042.8px;font-size:11px;color:#b4b4b4;">4201</div>
<div class="a" style="left:2006.5px;top:1042px;width:1px;height:14px;background:#5a5a5a"></div>
<div class="t" style="left:2014px;top:1042.8px;font-size:11px;color:#b4b4b4;">4500</div>
<div class="a" style="left:2021px;top:1042px;width:1.5px;height:14px;background:#6f8fe0"></div>
<div class="a" style="left:303px;top:1057px;width:1718px;height:8px;background:#3c4e78"></div>
<div class="a" style="left:283px;top:1057px;width:20px;height:8px;background:#585858;border:1px solid #777"></div>
<div class="a" style="left:2021px;top:1057px;width:21px;height:8px;background:#585858;border:1px solid #777"></div>
<div class="a" style="left:281px;top:1066px;width:1763px;height:1px;background:#4a4b50"></div>
<div class="a" style="left:284px;top:1069px;width:21px;height:20px;background:#363843;border:1px solid #5e6066"></div>
<div class="a" style="left:284px;top:1088px;width:21px;height:20px;background:#363843;border:1px solid #5e6066"></div>
<div class="t" style="left:291px;top:1072.3px;font-size:13px;color:#777b85;">/</div>
<div class="t" style="left:291.5px;top:1091.3px;font-size:13px;color:#777b85;font-family:Liberation Serif;">I</div>
<div class="a" style="left:307px;top:1069px;width:69px;height:19px;background:#363843;border:1px solid #6b6d73"></div>
<div class="a" style="left:309px;top:1071px;width:65px;height:15px;background:#d4894a"></div>
<div class="t" style="left:311px;top:1072.3px;font-size:13px;color:#5c1a0c;">TimeCode</div>
<div class="a" style="left:307px;top:1088px;width:69px;height:20px;background:#363843;border:1px solid #6b6d73"></div>
<div class="t" style="left:325px;top:1091.3px;font-size:13px;color:#b8bcc6;">Beats</div>
<div class="a" style="left:378px;top:1069px;width:201px;height:39px;background:#000;border:1px solid #444"></div>
<div class="t" style="left:399px;top:1078.1px;font-size:26.5px;color:#6fa0f0;letter-spacing:1.9px;">00:01:13:55</div>
<div class="a" style="left:581px;top:1069px;width:136px;height:39px;background:#000;border:1px solid #444"></div>
<div class="t" style="left:618px;top:1078.1px;font-size:26.5px;color:#6fa0f0;letter-spacing:1.2px;">4436</div>
<div class="a" style="left:719px;top:1069px;width:39px;height:39px;background:#363843;border:1px solid #5e6066"></div>
<div class="a" style="left:802px;top:1069px;width:39px;height:39px;background:#363843;border:1px solid #5e6066"></div>
<div class="a" style="left:843px;top:1069px;width:39px;height:39px;background:#363843;border:1px solid #5e6066"></div>
<div class="a" style="left:884px;top:1069px;width:39px;height:39px;background:#363843;border:1px solid #5e6066"></div>
<div class="a" style="left:926px;top:1069px;width:39px;height:39px;background:#363843;border:1px solid #5e6066"></div>
<div class="a" style="left:761px;top:1069px;width:39px;height:39px;background:#d4894a;border:1px solid #6b6d73"></div>
<svg style="left:719px;top:1069px" width="39" height="39"><path d="M13 14V25" stroke="#a9b0c0" stroke-width="2"/><path d="M20 14L14 19.5L20 25Z M26 14L20 19.5L26 25Z" fill="#a9b0c0"/></svg>
<svg style="left:761px;top:1069px" width="39" height="39"><rect x="15" y="14" width="3" height="11" fill="#5a1408"/><rect x="21" y="14" width="3" height="11" fill="#5a1408"/></svg>
<svg style="left:802px;top:1069px" width="39" height="39"><path d="M22 14L16 19.5L22 25Z" fill="#a9b0c0"/></svg>
<svg style="left:843px;top:1069px" width="39" height="39"><path d="M17 14L23 19.5L17 25Z" fill="#a9b0c0"/></svg>
<svg style="left:884px;top:1069px" width="39" height="39"><rect x="16" y="19" width="6" height="2" fill="#a9b0c0"/></svg>
<svg style="left:926px;top:1069px" width="39" height="39"><path d="M19 13.5V25.5M13 19.5H25" stroke="#a9b0c0" stroke-width="2"/></svg>
<div class="t" style="left:970px;top:1073.3px;font-size:13px;color:#c0c4ce;">Range Limit</div>
<div class="a" style="left:967px;top:1090px;width:52px;height:19px;background:#363843;border:1px solid #6b6d73"></div>
<div class="a" style="left:969px;top:1092px;width:48px;height:15px;background:#d4894a"></div>
<div class="t" style="left:979px;top:1093.3px;font-size:13px;color:#5c1a0c;">Loop</div>
<div class="a" style="left:1021px;top:1090px;width:45px;height:19px;background:#363843;border:1px solid #6b6d73"></div>
<div class="t" style="left:1028px;top:1093.3px;font-size:13px;color:#b8bcc6;">Once</div>
<div class="a" style="left:1066px;top:1068px;width:978px;height:41px;border:1px solid #3c3d42;border-left:none;border-top:none"></div>
<div class="a" style="left:0;top:1110px;width:2048px;height:1px;background:#5a5b60"></div><div class="a" style="left:0;top:1111px;width:2048px;height:1px;background:#2a2b2f"></div>
</body></html>
